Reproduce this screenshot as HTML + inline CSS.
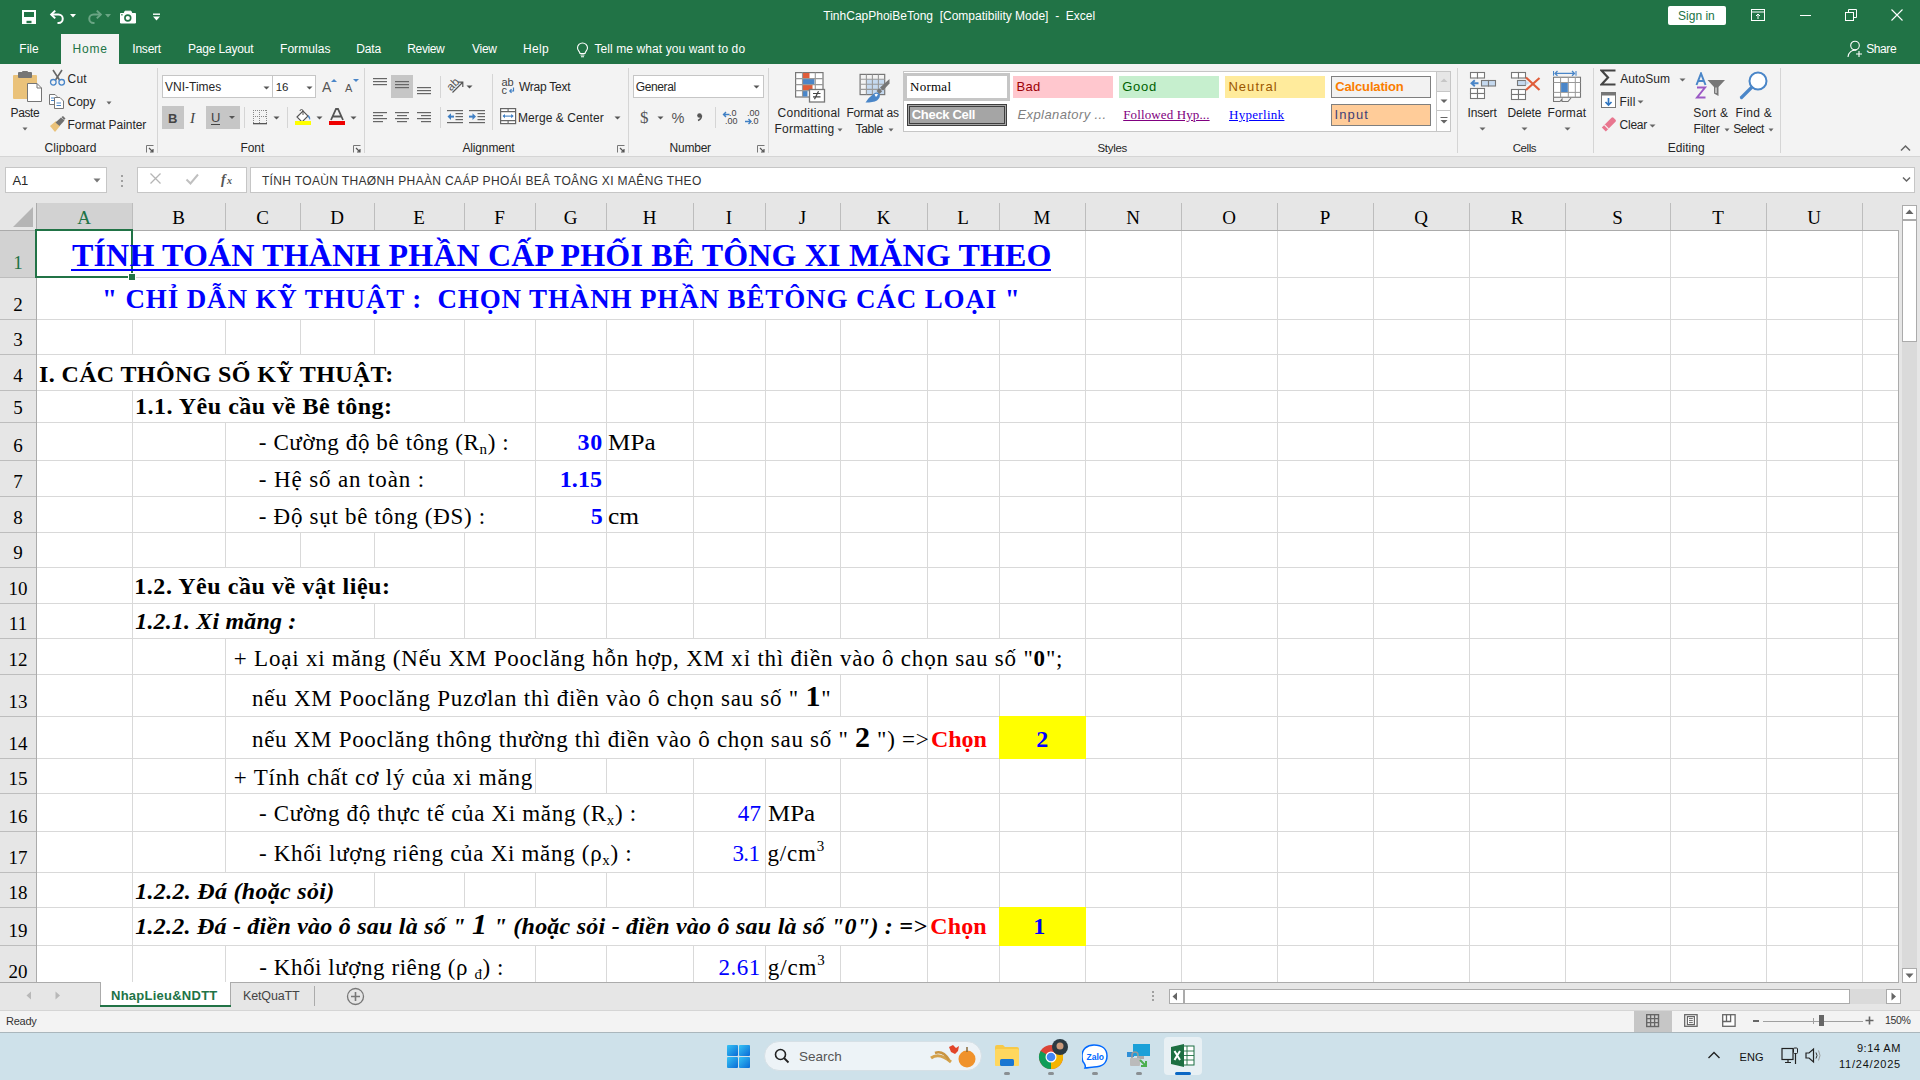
<!DOCTYPE html>
<html><head><meta charset="utf-8"><style>
html,body{margin:0;padding:0;width:1920px;height:1080px;overflow:hidden;background:#f3f3f3;position:relative}
body div, body svg{position:absolute}
body div{white-space:pre;line-height:normal}
.hd{font-family:"Liberation Serif",serif;font-size:19px;text-align:center}
</style></head><body>
<div style="left:0px;top:0px;width:1920px;height:64px;background:#217346;"></div><div style="left:61px;top:34px;width:58px;height:30px;background:#f3f3f3;"></div><div style="left:0px;top:64px;width:1920px;height:92px;background:#f3f3f3;"></div><div style="left:0px;top:156px;width:1920px;height:1px;background:#d5d5d5;"></div><div style="left:0px;top:157px;width:1920px;height:46px;background:#e6e6e6;"></div><div style="left:1898px;top:203px;width:22px;height:780px;background:#e6e6e6;"></div><div style="left:0px;top:983px;width:1920px;height:27px;background:#e6e6e6;"></div><div style="left:0px;top:1010px;width:1920px;height:1px;background:#d5d5d5;"></div><div style="left:0px;top:1011px;width:1920px;height:21px;background:#f3f3f3;"></div><div style="left:0px;top:1032px;width:1920px;height:1px;background:#aab6bc;"></div><div style="left:0px;top:1033px;width:1920px;height:47px;background:#cee1ea;"></div>
<div style="left:0px;top:203px;width:1902px;height:27px;background:#e6e6e6;"></div><div style="left:36px;top:203px;width:96px;height:27px;background:#d2d2d2;"></div><div style="left:0px;top:231px;width:36px;height:751px;background:#e6e6e6;"></div><div style="left:0px;top:231px;width:36px;height:46px;background:#d2d2d2;"></div><div style="left:0px;top:230px;width:1898px;height:1px;background:#ababab;"></div><div style="left:36px;top:203px;width:1px;height:779px;background:#ababab;"></div><div style="left:132px;top:203px;width:1px;height:27px;background:#bdbdbd;"></div><div style="left:225px;top:203px;width:1px;height:27px;background:#bdbdbd;"></div><div style="left:300px;top:203px;width:1px;height:27px;background:#bdbdbd;"></div><div style="left:374px;top:203px;width:1px;height:27px;background:#bdbdbd;"></div><div style="left:464px;top:203px;width:1px;height:27px;background:#bdbdbd;"></div><div style="left:535px;top:203px;width:1px;height:27px;background:#bdbdbd;"></div><div style="left:606px;top:203px;width:1px;height:27px;background:#bdbdbd;"></div><div style="left:693px;top:203px;width:1px;height:27px;background:#bdbdbd;"></div><div style="left:765px;top:203px;width:1px;height:27px;background:#bdbdbd;"></div><div style="left:840px;top:203px;width:1px;height:27px;background:#bdbdbd;"></div><div style="left:927px;top:203px;width:1px;height:27px;background:#bdbdbd;"></div><div style="left:999px;top:203px;width:1px;height:27px;background:#bdbdbd;"></div><div style="left:1085px;top:203px;width:1px;height:27px;background:#bdbdbd;"></div><div style="left:1181px;top:203px;width:1px;height:27px;background:#bdbdbd;"></div><div style="left:1277px;top:203px;width:1px;height:27px;background:#bdbdbd;"></div><div style="left:1373px;top:203px;width:1px;height:27px;background:#bdbdbd;"></div><div style="left:1469px;top:203px;width:1px;height:27px;background:#bdbdbd;"></div><div style="left:1565px;top:203px;width:1px;height:27px;background:#bdbdbd;"></div><div style="left:1670px;top:203px;width:1px;height:27px;background:#bdbdbd;"></div><div style="left:1766px;top:203px;width:1px;height:27px;background:#bdbdbd;"></div><div style="left:1862px;top:203px;width:1px;height:27px;background:#bdbdbd;"></div><div style="left:0px;top:277px;width:36px;height:1px;background:#bdbdbd;"></div><div style="left:0px;top:319px;width:36px;height:1px;background:#bdbdbd;"></div><div style="left:0px;top:354px;width:36px;height:1px;background:#bdbdbd;"></div><div style="left:0px;top:390px;width:36px;height:1px;background:#bdbdbd;"></div><div style="left:0px;top:422px;width:36px;height:1px;background:#bdbdbd;"></div><div style="left:0px;top:460px;width:36px;height:1px;background:#bdbdbd;"></div><div style="left:0px;top:496px;width:36px;height:1px;background:#bdbdbd;"></div><div style="left:0px;top:532px;width:36px;height:1px;background:#bdbdbd;"></div><div style="left:0px;top:567px;width:36px;height:1px;background:#bdbdbd;"></div><div style="left:0px;top:603px;width:36px;height:1px;background:#bdbdbd;"></div><div style="left:0px;top:638px;width:36px;height:1px;background:#bdbdbd;"></div><div style="left:0px;top:674px;width:36px;height:1px;background:#bdbdbd;"></div><div style="left:0px;top:716px;width:36px;height:1px;background:#bdbdbd;"></div><div style="left:0px;top:758px;width:36px;height:1px;background:#bdbdbd;"></div><div style="left:0px;top:793px;width:36px;height:1px;background:#bdbdbd;"></div><div style="left:0px;top:831px;width:36px;height:1px;background:#bdbdbd;"></div><div style="left:0px;top:872px;width:36px;height:1px;background:#bdbdbd;"></div><div style="left:0px;top:907px;width:36px;height:1px;background:#bdbdbd;"></div><div style="left:0px;top:945px;width:36px;height:1px;background:#bdbdbd;"></div><svg style="position:absolute;left:12px;top:206px" width="22" height="22"><polygon points="21,1 21,21 1,21" fill="#b5b5b5"/></svg>
<div style="left:37px;top:231px;width:1861px;height:751px;background:#fff;"></div><div style="left:37px;top:277px;width:1861px;height:1px;background:#d9d9d9;"></div><div style="left:37px;top:319px;width:1861px;height:1px;background:#d9d9d9;"></div><div style="left:37px;top:354px;width:1861px;height:1px;background:#d9d9d9;"></div><div style="left:37px;top:390px;width:1861px;height:1px;background:#d9d9d9;"></div><div style="left:37px;top:422px;width:1861px;height:1px;background:#d9d9d9;"></div><div style="left:37px;top:460px;width:1861px;height:1px;background:#d9d9d9;"></div><div style="left:37px;top:496px;width:1861px;height:1px;background:#d9d9d9;"></div><div style="left:37px;top:532px;width:1861px;height:1px;background:#d9d9d9;"></div><div style="left:37px;top:567px;width:1861px;height:1px;background:#d9d9d9;"></div><div style="left:37px;top:603px;width:1861px;height:1px;background:#d9d9d9;"></div><div style="left:37px;top:638px;width:1861px;height:1px;background:#d9d9d9;"></div><div style="left:37px;top:674px;width:1861px;height:1px;background:#d9d9d9;"></div><div style="left:37px;top:716px;width:1861px;height:1px;background:#d9d9d9;"></div><div style="left:37px;top:758px;width:1861px;height:1px;background:#d9d9d9;"></div><div style="left:37px;top:793px;width:1861px;height:1px;background:#d9d9d9;"></div><div style="left:37px;top:831px;width:1861px;height:1px;background:#d9d9d9;"></div><div style="left:37px;top:872px;width:1861px;height:1px;background:#d9d9d9;"></div><div style="left:37px;top:907px;width:1861px;height:1px;background:#d9d9d9;"></div><div style="left:37px;top:945px;width:1861px;height:1px;background:#d9d9d9;"></div><div style="left:1085px;top:231px;width:1px;height:46px;background:#d9d9d9;"></div><div style="left:1181px;top:231px;width:1px;height:46px;background:#d9d9d9;"></div><div style="left:1277px;top:231px;width:1px;height:46px;background:#d9d9d9;"></div><div style="left:1373px;top:231px;width:1px;height:46px;background:#d9d9d9;"></div><div style="left:1469px;top:231px;width:1px;height:46px;background:#d9d9d9;"></div><div style="left:1565px;top:231px;width:1px;height:46px;background:#d9d9d9;"></div><div style="left:1670px;top:231px;width:1px;height:46px;background:#d9d9d9;"></div><div style="left:1766px;top:231px;width:1px;height:46px;background:#d9d9d9;"></div><div style="left:1862px;top:231px;width:1px;height:46px;background:#d9d9d9;"></div><div style="left:1085px;top:278px;width:1px;height:41px;background:#d9d9d9;"></div><div style="left:1181px;top:278px;width:1px;height:41px;background:#d9d9d9;"></div><div style="left:1277px;top:278px;width:1px;height:41px;background:#d9d9d9;"></div><div style="left:1373px;top:278px;width:1px;height:41px;background:#d9d9d9;"></div><div style="left:1469px;top:278px;width:1px;height:41px;background:#d9d9d9;"></div><div style="left:1565px;top:278px;width:1px;height:41px;background:#d9d9d9;"></div><div style="left:1670px;top:278px;width:1px;height:41px;background:#d9d9d9;"></div><div style="left:1766px;top:278px;width:1px;height:41px;background:#d9d9d9;"></div><div style="left:1862px;top:278px;width:1px;height:41px;background:#d9d9d9;"></div><div style="left:132px;top:320px;width:1px;height:34px;background:#d9d9d9;"></div><div style="left:225px;top:320px;width:1px;height:34px;background:#d9d9d9;"></div><div style="left:300px;top:320px;width:1px;height:34px;background:#d9d9d9;"></div><div style="left:374px;top:320px;width:1px;height:34px;background:#d9d9d9;"></div><div style="left:464px;top:320px;width:1px;height:34px;background:#d9d9d9;"></div><div style="left:535px;top:320px;width:1px;height:34px;background:#d9d9d9;"></div><div style="left:606px;top:320px;width:1px;height:34px;background:#d9d9d9;"></div><div style="left:693px;top:320px;width:1px;height:34px;background:#d9d9d9;"></div><div style="left:765px;top:320px;width:1px;height:34px;background:#d9d9d9;"></div><div style="left:840px;top:320px;width:1px;height:34px;background:#d9d9d9;"></div><div style="left:927px;top:320px;width:1px;height:34px;background:#d9d9d9;"></div><div style="left:999px;top:320px;width:1px;height:34px;background:#d9d9d9;"></div><div style="left:1085px;top:320px;width:1px;height:34px;background:#d9d9d9;"></div><div style="left:1181px;top:320px;width:1px;height:34px;background:#d9d9d9;"></div><div style="left:1277px;top:320px;width:1px;height:34px;background:#d9d9d9;"></div><div style="left:1373px;top:320px;width:1px;height:34px;background:#d9d9d9;"></div><div style="left:1469px;top:320px;width:1px;height:34px;background:#d9d9d9;"></div><div style="left:1565px;top:320px;width:1px;height:34px;background:#d9d9d9;"></div><div style="left:1670px;top:320px;width:1px;height:34px;background:#d9d9d9;"></div><div style="left:1766px;top:320px;width:1px;height:34px;background:#d9d9d9;"></div><div style="left:1862px;top:320px;width:1px;height:34px;background:#d9d9d9;"></div><div style="left:464px;top:355px;width:1px;height:35px;background:#d9d9d9;"></div><div style="left:535px;top:355px;width:1px;height:35px;background:#d9d9d9;"></div><div style="left:606px;top:355px;width:1px;height:35px;background:#d9d9d9;"></div><div style="left:693px;top:355px;width:1px;height:35px;background:#d9d9d9;"></div><div style="left:765px;top:355px;width:1px;height:35px;background:#d9d9d9;"></div><div style="left:840px;top:355px;width:1px;height:35px;background:#d9d9d9;"></div><div style="left:927px;top:355px;width:1px;height:35px;background:#d9d9d9;"></div><div style="left:999px;top:355px;width:1px;height:35px;background:#d9d9d9;"></div><div style="left:1085px;top:355px;width:1px;height:35px;background:#d9d9d9;"></div><div style="left:1181px;top:355px;width:1px;height:35px;background:#d9d9d9;"></div><div style="left:1277px;top:355px;width:1px;height:35px;background:#d9d9d9;"></div><div style="left:1373px;top:355px;width:1px;height:35px;background:#d9d9d9;"></div><div style="left:1469px;top:355px;width:1px;height:35px;background:#d9d9d9;"></div><div style="left:1565px;top:355px;width:1px;height:35px;background:#d9d9d9;"></div><div style="left:1670px;top:355px;width:1px;height:35px;background:#d9d9d9;"></div><div style="left:1766px;top:355px;width:1px;height:35px;background:#d9d9d9;"></div><div style="left:1862px;top:355px;width:1px;height:35px;background:#d9d9d9;"></div><div style="left:132px;top:391px;width:1px;height:31px;background:#d9d9d9;"></div><div style="left:464px;top:391px;width:1px;height:31px;background:#d9d9d9;"></div><div style="left:535px;top:391px;width:1px;height:31px;background:#d9d9d9;"></div><div style="left:606px;top:391px;width:1px;height:31px;background:#d9d9d9;"></div><div style="left:693px;top:391px;width:1px;height:31px;background:#d9d9d9;"></div><div style="left:765px;top:391px;width:1px;height:31px;background:#d9d9d9;"></div><div style="left:840px;top:391px;width:1px;height:31px;background:#d9d9d9;"></div><div style="left:927px;top:391px;width:1px;height:31px;background:#d9d9d9;"></div><div style="left:999px;top:391px;width:1px;height:31px;background:#d9d9d9;"></div><div style="left:1085px;top:391px;width:1px;height:31px;background:#d9d9d9;"></div><div style="left:1181px;top:391px;width:1px;height:31px;background:#d9d9d9;"></div><div style="left:1277px;top:391px;width:1px;height:31px;background:#d9d9d9;"></div><div style="left:1373px;top:391px;width:1px;height:31px;background:#d9d9d9;"></div><div style="left:1469px;top:391px;width:1px;height:31px;background:#d9d9d9;"></div><div style="left:1565px;top:391px;width:1px;height:31px;background:#d9d9d9;"></div><div style="left:1670px;top:391px;width:1px;height:31px;background:#d9d9d9;"></div><div style="left:1766px;top:391px;width:1px;height:31px;background:#d9d9d9;"></div><div style="left:1862px;top:391px;width:1px;height:31px;background:#d9d9d9;"></div><div style="left:132px;top:423px;width:1px;height:37px;background:#d9d9d9;"></div><div style="left:225px;top:423px;width:1px;height:37px;background:#d9d9d9;"></div><div style="left:535px;top:423px;width:1px;height:37px;background:#d9d9d9;"></div><div style="left:606px;top:423px;width:1px;height:37px;background:#d9d9d9;"></div><div style="left:693px;top:423px;width:1px;height:37px;background:#d9d9d9;"></div><div style="left:765px;top:423px;width:1px;height:37px;background:#d9d9d9;"></div><div style="left:840px;top:423px;width:1px;height:37px;background:#d9d9d9;"></div><div style="left:927px;top:423px;width:1px;height:37px;background:#d9d9d9;"></div><div style="left:999px;top:423px;width:1px;height:37px;background:#d9d9d9;"></div><div style="left:1085px;top:423px;width:1px;height:37px;background:#d9d9d9;"></div><div style="left:1181px;top:423px;width:1px;height:37px;background:#d9d9d9;"></div><div style="left:1277px;top:423px;width:1px;height:37px;background:#d9d9d9;"></div><div style="left:1373px;top:423px;width:1px;height:37px;background:#d9d9d9;"></div><div style="left:1469px;top:423px;width:1px;height:37px;background:#d9d9d9;"></div><div style="left:1565px;top:423px;width:1px;height:37px;background:#d9d9d9;"></div><div style="left:1670px;top:423px;width:1px;height:37px;background:#d9d9d9;"></div><div style="left:1766px;top:423px;width:1px;height:37px;background:#d9d9d9;"></div><div style="left:1862px;top:423px;width:1px;height:37px;background:#d9d9d9;"></div><div style="left:132px;top:461px;width:1px;height:35px;background:#d9d9d9;"></div><div style="left:225px;top:461px;width:1px;height:35px;background:#d9d9d9;"></div><div style="left:464px;top:461px;width:1px;height:35px;background:#d9d9d9;"></div><div style="left:535px;top:461px;width:1px;height:35px;background:#d9d9d9;"></div><div style="left:606px;top:461px;width:1px;height:35px;background:#d9d9d9;"></div><div style="left:693px;top:461px;width:1px;height:35px;background:#d9d9d9;"></div><div style="left:765px;top:461px;width:1px;height:35px;background:#d9d9d9;"></div><div style="left:840px;top:461px;width:1px;height:35px;background:#d9d9d9;"></div><div style="left:927px;top:461px;width:1px;height:35px;background:#d9d9d9;"></div><div style="left:999px;top:461px;width:1px;height:35px;background:#d9d9d9;"></div><div style="left:1085px;top:461px;width:1px;height:35px;background:#d9d9d9;"></div><div style="left:1181px;top:461px;width:1px;height:35px;background:#d9d9d9;"></div><div style="left:1277px;top:461px;width:1px;height:35px;background:#d9d9d9;"></div><div style="left:1373px;top:461px;width:1px;height:35px;background:#d9d9d9;"></div><div style="left:1469px;top:461px;width:1px;height:35px;background:#d9d9d9;"></div><div style="left:1565px;top:461px;width:1px;height:35px;background:#d9d9d9;"></div><div style="left:1670px;top:461px;width:1px;height:35px;background:#d9d9d9;"></div><div style="left:1766px;top:461px;width:1px;height:35px;background:#d9d9d9;"></div><div style="left:1862px;top:461px;width:1px;height:35px;background:#d9d9d9;"></div><div style="left:132px;top:497px;width:1px;height:35px;background:#d9d9d9;"></div><div style="left:225px;top:497px;width:1px;height:35px;background:#d9d9d9;"></div><div style="left:535px;top:497px;width:1px;height:35px;background:#d9d9d9;"></div><div style="left:606px;top:497px;width:1px;height:35px;background:#d9d9d9;"></div><div style="left:693px;top:497px;width:1px;height:35px;background:#d9d9d9;"></div><div style="left:765px;top:497px;width:1px;height:35px;background:#d9d9d9;"></div><div style="left:840px;top:497px;width:1px;height:35px;background:#d9d9d9;"></div><div style="left:927px;top:497px;width:1px;height:35px;background:#d9d9d9;"></div><div style="left:999px;top:497px;width:1px;height:35px;background:#d9d9d9;"></div><div style="left:1085px;top:497px;width:1px;height:35px;background:#d9d9d9;"></div><div style="left:1181px;top:497px;width:1px;height:35px;background:#d9d9d9;"></div><div style="left:1277px;top:497px;width:1px;height:35px;background:#d9d9d9;"></div><div style="left:1373px;top:497px;width:1px;height:35px;background:#d9d9d9;"></div><div style="left:1469px;top:497px;width:1px;height:35px;background:#d9d9d9;"></div><div style="left:1565px;top:497px;width:1px;height:35px;background:#d9d9d9;"></div><div style="left:1670px;top:497px;width:1px;height:35px;background:#d9d9d9;"></div><div style="left:1766px;top:497px;width:1px;height:35px;background:#d9d9d9;"></div><div style="left:1862px;top:497px;width:1px;height:35px;background:#d9d9d9;"></div><div style="left:132px;top:533px;width:1px;height:34px;background:#d9d9d9;"></div><div style="left:225px;top:533px;width:1px;height:34px;background:#d9d9d9;"></div><div style="left:300px;top:533px;width:1px;height:34px;background:#d9d9d9;"></div><div style="left:374px;top:533px;width:1px;height:34px;background:#d9d9d9;"></div><div style="left:464px;top:533px;width:1px;height:34px;background:#d9d9d9;"></div><div style="left:535px;top:533px;width:1px;height:34px;background:#d9d9d9;"></div><div style="left:606px;top:533px;width:1px;height:34px;background:#d9d9d9;"></div><div style="left:693px;top:533px;width:1px;height:34px;background:#d9d9d9;"></div><div style="left:765px;top:533px;width:1px;height:34px;background:#d9d9d9;"></div><div style="left:840px;top:533px;width:1px;height:34px;background:#d9d9d9;"></div><div style="left:927px;top:533px;width:1px;height:34px;background:#d9d9d9;"></div><div style="left:999px;top:533px;width:1px;height:34px;background:#d9d9d9;"></div><div style="left:1085px;top:533px;width:1px;height:34px;background:#d9d9d9;"></div><div style="left:1181px;top:533px;width:1px;height:34px;background:#d9d9d9;"></div><div style="left:1277px;top:533px;width:1px;height:34px;background:#d9d9d9;"></div><div style="left:1373px;top:533px;width:1px;height:34px;background:#d9d9d9;"></div><div style="left:1469px;top:533px;width:1px;height:34px;background:#d9d9d9;"></div><div style="left:1565px;top:533px;width:1px;height:34px;background:#d9d9d9;"></div><div style="left:1670px;top:533px;width:1px;height:34px;background:#d9d9d9;"></div><div style="left:1766px;top:533px;width:1px;height:34px;background:#d9d9d9;"></div><div style="left:1862px;top:533px;width:1px;height:34px;background:#d9d9d9;"></div><div style="left:132px;top:568px;width:1px;height:35px;background:#d9d9d9;"></div><div style="left:464px;top:568px;width:1px;height:35px;background:#d9d9d9;"></div><div style="left:535px;top:568px;width:1px;height:35px;background:#d9d9d9;"></div><div style="left:606px;top:568px;width:1px;height:35px;background:#d9d9d9;"></div><div style="left:693px;top:568px;width:1px;height:35px;background:#d9d9d9;"></div><div style="left:765px;top:568px;width:1px;height:35px;background:#d9d9d9;"></div><div style="left:840px;top:568px;width:1px;height:35px;background:#d9d9d9;"></div><div style="left:927px;top:568px;width:1px;height:35px;background:#d9d9d9;"></div><div style="left:999px;top:568px;width:1px;height:35px;background:#d9d9d9;"></div><div style="left:1085px;top:568px;width:1px;height:35px;background:#d9d9d9;"></div><div style="left:1181px;top:568px;width:1px;height:35px;background:#d9d9d9;"></div><div style="left:1277px;top:568px;width:1px;height:35px;background:#d9d9d9;"></div><div style="left:1373px;top:568px;width:1px;height:35px;background:#d9d9d9;"></div><div style="left:1469px;top:568px;width:1px;height:35px;background:#d9d9d9;"></div><div style="left:1565px;top:568px;width:1px;height:35px;background:#d9d9d9;"></div><div style="left:1670px;top:568px;width:1px;height:35px;background:#d9d9d9;"></div><div style="left:1766px;top:568px;width:1px;height:35px;background:#d9d9d9;"></div><div style="left:1862px;top:568px;width:1px;height:35px;background:#d9d9d9;"></div><div style="left:132px;top:604px;width:1px;height:34px;background:#d9d9d9;"></div><div style="left:374px;top:604px;width:1px;height:34px;background:#d9d9d9;"></div><div style="left:464px;top:604px;width:1px;height:34px;background:#d9d9d9;"></div><div style="left:535px;top:604px;width:1px;height:34px;background:#d9d9d9;"></div><div style="left:606px;top:604px;width:1px;height:34px;background:#d9d9d9;"></div><div style="left:693px;top:604px;width:1px;height:34px;background:#d9d9d9;"></div><div style="left:765px;top:604px;width:1px;height:34px;background:#d9d9d9;"></div><div style="left:840px;top:604px;width:1px;height:34px;background:#d9d9d9;"></div><div style="left:927px;top:604px;width:1px;height:34px;background:#d9d9d9;"></div><div style="left:999px;top:604px;width:1px;height:34px;background:#d9d9d9;"></div><div style="left:1085px;top:604px;width:1px;height:34px;background:#d9d9d9;"></div><div style="left:1181px;top:604px;width:1px;height:34px;background:#d9d9d9;"></div><div style="left:1277px;top:604px;width:1px;height:34px;background:#d9d9d9;"></div><div style="left:1373px;top:604px;width:1px;height:34px;background:#d9d9d9;"></div><div style="left:1469px;top:604px;width:1px;height:34px;background:#d9d9d9;"></div><div style="left:1565px;top:604px;width:1px;height:34px;background:#d9d9d9;"></div><div style="left:1670px;top:604px;width:1px;height:34px;background:#d9d9d9;"></div><div style="left:1766px;top:604px;width:1px;height:34px;background:#d9d9d9;"></div><div style="left:1862px;top:604px;width:1px;height:34px;background:#d9d9d9;"></div><div style="left:132px;top:639px;width:1px;height:35px;background:#d9d9d9;"></div><div style="left:225px;top:639px;width:1px;height:35px;background:#d9d9d9;"></div><div style="left:1085px;top:639px;width:1px;height:35px;background:#d9d9d9;"></div><div style="left:1181px;top:639px;width:1px;height:35px;background:#d9d9d9;"></div><div style="left:1277px;top:639px;width:1px;height:35px;background:#d9d9d9;"></div><div style="left:1373px;top:639px;width:1px;height:35px;background:#d9d9d9;"></div><div style="left:1469px;top:639px;width:1px;height:35px;background:#d9d9d9;"></div><div style="left:1565px;top:639px;width:1px;height:35px;background:#d9d9d9;"></div><div style="left:1670px;top:639px;width:1px;height:35px;background:#d9d9d9;"></div><div style="left:1766px;top:639px;width:1px;height:35px;background:#d9d9d9;"></div><div style="left:1862px;top:639px;width:1px;height:35px;background:#d9d9d9;"></div><div style="left:132px;top:675px;width:1px;height:41px;background:#d9d9d9;"></div><div style="left:225px;top:675px;width:1px;height:41px;background:#d9d9d9;"></div><div style="left:840px;top:675px;width:1px;height:41px;background:#d9d9d9;"></div><div style="left:927px;top:675px;width:1px;height:41px;background:#d9d9d9;"></div><div style="left:999px;top:675px;width:1px;height:41px;background:#d9d9d9;"></div><div style="left:1085px;top:675px;width:1px;height:41px;background:#d9d9d9;"></div><div style="left:1181px;top:675px;width:1px;height:41px;background:#d9d9d9;"></div><div style="left:1277px;top:675px;width:1px;height:41px;background:#d9d9d9;"></div><div style="left:1373px;top:675px;width:1px;height:41px;background:#d9d9d9;"></div><div style="left:1469px;top:675px;width:1px;height:41px;background:#d9d9d9;"></div><div style="left:1565px;top:675px;width:1px;height:41px;background:#d9d9d9;"></div><div style="left:1670px;top:675px;width:1px;height:41px;background:#d9d9d9;"></div><div style="left:1766px;top:675px;width:1px;height:41px;background:#d9d9d9;"></div><div style="left:1862px;top:675px;width:1px;height:41px;background:#d9d9d9;"></div><div style="left:132px;top:717px;width:1px;height:41px;background:#d9d9d9;"></div><div style="left:225px;top:717px;width:1px;height:41px;background:#d9d9d9;"></div><div style="left:927px;top:717px;width:1px;height:41px;background:#d9d9d9;"></div><div style="left:999px;top:717px;width:1px;height:41px;background:#d9d9d9;"></div><div style="left:1085px;top:717px;width:1px;height:41px;background:#d9d9d9;"></div><div style="left:1181px;top:717px;width:1px;height:41px;background:#d9d9d9;"></div><div style="left:1277px;top:717px;width:1px;height:41px;background:#d9d9d9;"></div><div style="left:1373px;top:717px;width:1px;height:41px;background:#d9d9d9;"></div><div style="left:1469px;top:717px;width:1px;height:41px;background:#d9d9d9;"></div><div style="left:1565px;top:717px;width:1px;height:41px;background:#d9d9d9;"></div><div style="left:1670px;top:717px;width:1px;height:41px;background:#d9d9d9;"></div><div style="left:1766px;top:717px;width:1px;height:41px;background:#d9d9d9;"></div><div style="left:1862px;top:717px;width:1px;height:41px;background:#d9d9d9;"></div><div style="left:132px;top:759px;width:1px;height:34px;background:#d9d9d9;"></div><div style="left:225px;top:759px;width:1px;height:34px;background:#d9d9d9;"></div><div style="left:535px;top:759px;width:1px;height:34px;background:#d9d9d9;"></div><div style="left:606px;top:759px;width:1px;height:34px;background:#d9d9d9;"></div><div style="left:693px;top:759px;width:1px;height:34px;background:#d9d9d9;"></div><div style="left:765px;top:759px;width:1px;height:34px;background:#d9d9d9;"></div><div style="left:840px;top:759px;width:1px;height:34px;background:#d9d9d9;"></div><div style="left:927px;top:759px;width:1px;height:34px;background:#d9d9d9;"></div><div style="left:999px;top:759px;width:1px;height:34px;background:#d9d9d9;"></div><div style="left:1085px;top:759px;width:1px;height:34px;background:#d9d9d9;"></div><div style="left:1181px;top:759px;width:1px;height:34px;background:#d9d9d9;"></div><div style="left:1277px;top:759px;width:1px;height:34px;background:#d9d9d9;"></div><div style="left:1373px;top:759px;width:1px;height:34px;background:#d9d9d9;"></div><div style="left:1469px;top:759px;width:1px;height:34px;background:#d9d9d9;"></div><div style="left:1565px;top:759px;width:1px;height:34px;background:#d9d9d9;"></div><div style="left:1670px;top:759px;width:1px;height:34px;background:#d9d9d9;"></div><div style="left:1766px;top:759px;width:1px;height:34px;background:#d9d9d9;"></div><div style="left:1862px;top:759px;width:1px;height:34px;background:#d9d9d9;"></div><div style="left:132px;top:794px;width:1px;height:37px;background:#d9d9d9;"></div><div style="left:225px;top:794px;width:1px;height:37px;background:#d9d9d9;"></div><div style="left:693px;top:794px;width:1px;height:37px;background:#d9d9d9;"></div><div style="left:765px;top:794px;width:1px;height:37px;background:#d9d9d9;"></div><div style="left:840px;top:794px;width:1px;height:37px;background:#d9d9d9;"></div><div style="left:927px;top:794px;width:1px;height:37px;background:#d9d9d9;"></div><div style="left:999px;top:794px;width:1px;height:37px;background:#d9d9d9;"></div><div style="left:1085px;top:794px;width:1px;height:37px;background:#d9d9d9;"></div><div style="left:1181px;top:794px;width:1px;height:37px;background:#d9d9d9;"></div><div style="left:1277px;top:794px;width:1px;height:37px;background:#d9d9d9;"></div><div style="left:1373px;top:794px;width:1px;height:37px;background:#d9d9d9;"></div><div style="left:1469px;top:794px;width:1px;height:37px;background:#d9d9d9;"></div><div style="left:1565px;top:794px;width:1px;height:37px;background:#d9d9d9;"></div><div style="left:1670px;top:794px;width:1px;height:37px;background:#d9d9d9;"></div><div style="left:1766px;top:794px;width:1px;height:37px;background:#d9d9d9;"></div><div style="left:1862px;top:794px;width:1px;height:37px;background:#d9d9d9;"></div><div style="left:132px;top:832px;width:1px;height:40px;background:#d9d9d9;"></div><div style="left:225px;top:832px;width:1px;height:40px;background:#d9d9d9;"></div><div style="left:693px;top:832px;width:1px;height:40px;background:#d9d9d9;"></div><div style="left:765px;top:832px;width:1px;height:40px;background:#d9d9d9;"></div><div style="left:840px;top:832px;width:1px;height:40px;background:#d9d9d9;"></div><div style="left:927px;top:832px;width:1px;height:40px;background:#d9d9d9;"></div><div style="left:999px;top:832px;width:1px;height:40px;background:#d9d9d9;"></div><div style="left:1085px;top:832px;width:1px;height:40px;background:#d9d9d9;"></div><div style="left:1181px;top:832px;width:1px;height:40px;background:#d9d9d9;"></div><div style="left:1277px;top:832px;width:1px;height:40px;background:#d9d9d9;"></div><div style="left:1373px;top:832px;width:1px;height:40px;background:#d9d9d9;"></div><div style="left:1469px;top:832px;width:1px;height:40px;background:#d9d9d9;"></div><div style="left:1565px;top:832px;width:1px;height:40px;background:#d9d9d9;"></div><div style="left:1670px;top:832px;width:1px;height:40px;background:#d9d9d9;"></div><div style="left:1766px;top:832px;width:1px;height:40px;background:#d9d9d9;"></div><div style="left:1862px;top:832px;width:1px;height:40px;background:#d9d9d9;"></div><div style="left:132px;top:873px;width:1px;height:34px;background:#d9d9d9;"></div><div style="left:374px;top:873px;width:1px;height:34px;background:#d9d9d9;"></div><div style="left:464px;top:873px;width:1px;height:34px;background:#d9d9d9;"></div><div style="left:535px;top:873px;width:1px;height:34px;background:#d9d9d9;"></div><div style="left:606px;top:873px;width:1px;height:34px;background:#d9d9d9;"></div><div style="left:693px;top:873px;width:1px;height:34px;background:#d9d9d9;"></div><div style="left:765px;top:873px;width:1px;height:34px;background:#d9d9d9;"></div><div style="left:840px;top:873px;width:1px;height:34px;background:#d9d9d9;"></div><div style="left:927px;top:873px;width:1px;height:34px;background:#d9d9d9;"></div><div style="left:999px;top:873px;width:1px;height:34px;background:#d9d9d9;"></div><div style="left:1085px;top:873px;width:1px;height:34px;background:#d9d9d9;"></div><div style="left:1181px;top:873px;width:1px;height:34px;background:#d9d9d9;"></div><div style="left:1277px;top:873px;width:1px;height:34px;background:#d9d9d9;"></div><div style="left:1373px;top:873px;width:1px;height:34px;background:#d9d9d9;"></div><div style="left:1469px;top:873px;width:1px;height:34px;background:#d9d9d9;"></div><div style="left:1565px;top:873px;width:1px;height:34px;background:#d9d9d9;"></div><div style="left:1670px;top:873px;width:1px;height:34px;background:#d9d9d9;"></div><div style="left:1766px;top:873px;width:1px;height:34px;background:#d9d9d9;"></div><div style="left:1862px;top:873px;width:1px;height:34px;background:#d9d9d9;"></div><div style="left:132px;top:908px;width:1px;height:37px;background:#d9d9d9;"></div><div style="left:927px;top:908px;width:1px;height:37px;background:#d9d9d9;"></div><div style="left:999px;top:908px;width:1px;height:37px;background:#d9d9d9;"></div><div style="left:1085px;top:908px;width:1px;height:37px;background:#d9d9d9;"></div><div style="left:1181px;top:908px;width:1px;height:37px;background:#d9d9d9;"></div><div style="left:1277px;top:908px;width:1px;height:37px;background:#d9d9d9;"></div><div style="left:1373px;top:908px;width:1px;height:37px;background:#d9d9d9;"></div><div style="left:1469px;top:908px;width:1px;height:37px;background:#d9d9d9;"></div><div style="left:1565px;top:908px;width:1px;height:37px;background:#d9d9d9;"></div><div style="left:1670px;top:908px;width:1px;height:37px;background:#d9d9d9;"></div><div style="left:1766px;top:908px;width:1px;height:37px;background:#d9d9d9;"></div><div style="left:1862px;top:908px;width:1px;height:37px;background:#d9d9d9;"></div><div style="left:132px;top:946px;width:1px;height:36px;background:#d9d9d9;"></div><div style="left:225px;top:946px;width:1px;height:36px;background:#d9d9d9;"></div><div style="left:535px;top:946px;width:1px;height:36px;background:#d9d9d9;"></div><div style="left:606px;top:946px;width:1px;height:36px;background:#d9d9d9;"></div><div style="left:693px;top:946px;width:1px;height:36px;background:#d9d9d9;"></div><div style="left:765px;top:946px;width:1px;height:36px;background:#d9d9d9;"></div><div style="left:840px;top:946px;width:1px;height:36px;background:#d9d9d9;"></div><div style="left:927px;top:946px;width:1px;height:36px;background:#d9d9d9;"></div><div style="left:999px;top:946px;width:1px;height:36px;background:#d9d9d9;"></div><div style="left:1085px;top:946px;width:1px;height:36px;background:#d9d9d9;"></div><div style="left:1181px;top:946px;width:1px;height:36px;background:#d9d9d9;"></div><div style="left:1277px;top:946px;width:1px;height:36px;background:#d9d9d9;"></div><div style="left:1373px;top:946px;width:1px;height:36px;background:#d9d9d9;"></div><div style="left:1469px;top:946px;width:1px;height:36px;background:#d9d9d9;"></div><div style="left:1565px;top:946px;width:1px;height:36px;background:#d9d9d9;"></div><div style="left:1670px;top:946px;width:1px;height:36px;background:#d9d9d9;"></div><div style="left:1766px;top:946px;width:1px;height:36px;background:#d9d9d9;"></div><div style="left:1862px;top:946px;width:1px;height:36px;background:#d9d9d9;"></div><div style="left:999px;top:716px;width:87px;height:43px;background:#ffff00;"></div><div style="left:999px;top:907px;width:87px;height:39px;background:#ffff00;"></div><div style="left:1898px;top:230px;width:1px;height:753px;background:#ababab;"></div><div style="left:0px;top:982px;width:1899px;height:1px;background:#ababab;"></div>
<div class="hd" style="left:36px;width:96px;top:207.1px;color:#217346">A</div><div class="hd" style="left:132px;width:93px;top:207.1px;color:#000">B</div><div class="hd" style="left:225px;width:75px;top:207.1px;color:#000">C</div><div class="hd" style="left:300px;width:74px;top:207.1px;color:#000">D</div><div class="hd" style="left:374px;width:90px;top:207.1px;color:#000">E</div><div class="hd" style="left:464px;width:71px;top:207.1px;color:#000">F</div><div class="hd" style="left:535px;width:71px;top:207.1px;color:#000">G</div><div class="hd" style="left:606px;width:87px;top:207.1px;color:#000">H</div><div class="hd" style="left:693px;width:72px;top:207.1px;color:#000">I</div><div class="hd" style="left:765px;width:75px;top:207.1px;color:#000">J</div><div class="hd" style="left:840px;width:87px;top:207.1px;color:#000">K</div><div class="hd" style="left:927px;width:72px;top:207.1px;color:#000">L</div><div class="hd" style="left:999px;width:86px;top:207.1px;color:#000">M</div><div class="hd" style="left:1085px;width:96px;top:207.1px;color:#000">N</div><div class="hd" style="left:1181px;width:96px;top:207.1px;color:#000">O</div><div class="hd" style="left:1277px;width:96px;top:207.1px;color:#000">P</div><div class="hd" style="left:1373px;width:96px;top:207.1px;color:#000">Q</div><div class="hd" style="left:1469px;width:96px;top:207.1px;color:#000">R</div><div class="hd" style="left:1565px;width:105px;top:207.1px;color:#000">S</div><div class="hd" style="left:1670px;width:96px;top:207.1px;color:#000">T</div><div class="hd" style="left:1766px;width:96px;top:207.1px;color:#000">U</div><div class="hd" style="left:0px;width:36px;top:252.1px;color:#217346">1</div><div class="hd" style="left:0px;width:36px;top:294.1px;color:#000">2</div><div class="hd" style="left:0px;width:36px;top:329.1px;color:#000">3</div><div class="hd" style="left:0px;width:36px;top:365.1px;color:#000">4</div><div class="hd" style="left:0px;width:36px;top:397.1px;color:#000">5</div><div class="hd" style="left:0px;width:36px;top:435.1px;color:#000">6</div><div class="hd" style="left:0px;width:36px;top:471.1px;color:#000">7</div><div class="hd" style="left:0px;width:36px;top:507.1px;color:#000">8</div><div class="hd" style="left:0px;width:36px;top:542.1px;color:#000">9</div><div class="hd" style="left:0px;width:36px;top:578.1px;color:#000">10</div><div class="hd" style="left:0px;width:36px;top:613.1px;color:#000">11</div><div class="hd" style="left:0px;width:36px;top:649.1px;color:#000">12</div><div class="hd" style="left:0px;width:36px;top:691.1px;color:#000">13</div><div class="hd" style="left:0px;width:36px;top:733.1px;color:#000">14</div><div class="hd" style="left:0px;width:36px;top:768.1px;color:#000">15</div><div class="hd" style="left:0px;width:36px;top:806.1px;color:#000">16</div><div class="hd" style="left:0px;width:36px;top:847.1px;color:#000">17</div><div class="hd" style="left:0px;width:36px;top:882.1px;color:#000">18</div><div class="hd" style="left:0px;width:36px;top:920.1px;color:#000">19</div><div class="hd" style="left:0px;width:36px;top:961.1px;color:#000">20</div>
<div style="left:35px;top:229px;width:98px;height:2px;background:#217346;"></div><div style="left:35px;top:229px;width:2px;height:49px;background:#217346;"></div><div style="left:131px;top:229px;width:2px;height:45px;background:#217346;"></div><div style="left:35px;top:276px;width:94px;height:2px;background:#217346;"></div><div style="left:129px;top:274px;width:6px;height:6px;background:#217346;border:1px solid #fff;box-sizing:content-box;left:128px;top:273px"></div>
<svg style="left:21px;top:9px;" width="16" height="16" viewBox="0 0 16 16"><rect x="2" y="2" width="12" height="12" fill="none" stroke="#fff" stroke-width="2"/><rect x="1" y="8" width="14" height="2.4" fill="#fff"/><rect x="3" y="10" width="10" height="5" fill="#fff"/><rect x="5.5" y="11.8" width="5" height="2.4" fill="#217346"/></svg><svg style="left:49px;top:9px;" width="18" height="16" viewBox="0 0 18 16"><path d="M2.5,5.5 H9.5 A4.2,4.2 0 0 1 9.5,14 H8.5" fill="none" stroke="#fff" stroke-width="2"/><path d="M6.2,1.6 L2.2,5.5 L6.2,9.4" fill="none" stroke="#fff" stroke-width="2"/></svg><svg style="left:70px;top:14px;" width="7" height="4" viewBox="0 0 7 4"><polygon points="0,0 6,0 3,3.5" fill="#fff"/></svg><svg style="left:85px;top:9px;" width="18" height="16" viewBox="0 0 18 16"><path d="M15.5,5.5 H8.5 A4.2,4.2 0 0 0 8.5,14 H9.5" fill="none" stroke="#6aa584" stroke-width="2"/><path d="M11.8,1.6 L15.8,5.5 L11.8,9.4" fill="none" stroke="#6aa584" stroke-width="2"/></svg><svg style="left:105px;top:14px;" width="7" height="4" viewBox="0 0 7 4"><polygon points="0,0 6,0 3,3.5" fill="#6aa584"/></svg><svg style="left:119px;top:10px;" width="18" height="14" viewBox="0 0 18 14"><path d="M1.5,3.5 H5 L6,1.2 H12 L13,3.5 H16.5 V13 H1.5 Z" fill="#fff" stroke="#fff" stroke-linejoin="round"/><circle cx="8.8" cy="8" r="2.9" fill="#fff" stroke="#217346" stroke-width="1.6"/><rect x="2.2" y="4.2" width="1.4" height="1.2" fill="#217346"/></svg><svg style="left:152px;top:13px;" width="9" height="10" viewBox="0 0 9 10"><rect x="1" y="0.5" width="7" height="1.4" fill="#fff"/><polygon points="1,3.5 8,3.5 4.5,7.5" fill="#fff"/></svg><div style="left:1668px;top:6px;width:58px;height:19px;background:#fff;border-radius:2px"></div><svg style="left:1751px;top:9px;" width="15" height="13" viewBox="0 0 15 13"><rect x="0.5" y="0.5" width="13" height="11" fill="none" stroke="#fff" stroke-width="1"/><line x1="0.5" y1="3" x2="13.5" y2="3" stroke="#fff"/><path d="M7,10 V5 M5,7 L7,5 L9,7" fill="none" stroke="#fff" stroke-width="1"/></svg><div style="left:1800px;top:15px;width:11px;height:1px;background:#fff;"></div><svg style="left:1845px;top:9px;" width="12" height="12" viewBox="0 0 12 12"><rect x="0.5" y="3.5" width="8" height="8" fill="none" stroke="#fff"/><path d="M3.5,3.5 V0.5 H11.5 V8.5 H8.5" fill="none" stroke="#fff"/></svg><svg style="left:1891px;top:9px;" width="12" height="12" viewBox="0 0 12 12"><path d="M0.5,0.5 L11.5,11.5 M11.5,0.5 L0.5,11.5" stroke="#fff" stroke-width="1.1"/></svg><svg style="left:1847px;top:40px;" width="17" height="18" viewBox="0 0 17 18"><circle cx="8" cy="5.5" r="4.3" fill="none" stroke="#fff" stroke-width="1.1"/><path d="M1,17 A7,7 0 0 1 9.5,10.3" fill="none" stroke="#fff" stroke-width="1.1"/><path d="M12,11 V17 M9,14 H15" stroke="#fff" stroke-width="1.1"/></svg><svg style="left:576px;top:42px;" width="13" height="16" viewBox="0 0 13 16"><path d="M6.5,1 A5,5 0 0 1 11.5,6 C11.5,8.5 9,9.5 9,11.5 H4 C4,9.5 1.5,8.5 1.5,6 A5,5 0 0 1 6.5,1 Z" fill="none" stroke="#fff" stroke-width="1.1"/><path d="M4.5,13 H8.5 M5,14.8 H8" stroke="#fff" stroke-width="1.1"/></svg><svg style="left:12px;top:71px;" width="31" height="32" viewBox="0 0 31 32"><rect x="1" y="4" width="24" height="24" rx="1" fill="#eac27a"/><rect x="6" y="1" width="14" height="6" rx="1" fill="#757575"/><rect x="10" y="0" width="6" height="3" rx="1" fill="#757575"/><path d="M15.5,12.5 H25 L29.5,17 V30.5 H15.5 Z" fill="#fff" stroke="#757575"/><path d="M25,12.5 V17 H29.5" fill="none" stroke="#757575"/></svg><svg style="left:21.5px;top:127px;" width="6" height="4" viewBox="0 0 6 4"><polygon points="0.5,0.5 5.5,0.5 3.0,3.5" fill="#666"/></svg><svg style="left:49px;top:69px;" width="17" height="18" viewBox="0 0 17 18"><path d="M4,1 L10.5,11 M13,1 L6.5,11" stroke="#666" stroke-width="1.6"/><circle cx="4.3" cy="13.3" r="2.8" fill="none" stroke="#4a86c8" stroke-width="1.3"/><circle cx="12.7" cy="13.3" r="2.8" fill="none" stroke="#4a86c8" stroke-width="1.3"/></svg><svg style="left:48px;top:93px;" width="17" height="17" viewBox="0 0 17 17"><path d="M1.5,1.5 H7 L9,3.5 V11.5 H1.5 Z" fill="#fff" stroke="#777"/><path d="M3,5 H6 M3,7.5 H6" stroke="#4a86c8"/><path d="M6.5,4.5 H12 L15.5,8 V15.5 H6.5 Z" fill="#fff" stroke="#777"/><path d="M8.5,10 H13 M8.5,12.5 H13" stroke="#4a86c8" stroke-width="1.2"/></svg><svg style="left:105.5px;top:101px;" width="6" height="4" viewBox="0 0 6 4"><polygon points="0.5,0.5 5.5,0.5 3.0,3.5" fill="#666"/></svg><svg style="left:48px;top:116px;" width="18" height="17" viewBox="0 0 18 17"><path d="M2,10 L8,5 L12,10 L7,16 Z" fill="#eac27a"/><path d="M7.5,6.5 L13,1.5 L16.5,4.5 L11.5,10 Z" fill="#707070"/><path d="M13.5,1 L15,0 L17.5,2.5 L16,4" fill="#707070"/></svg><svg style="left:146px;top:145px;" width="8" height="8" viewBox="0 0 8 8"><path d="M0.5,7.5 V0.5 H7.5" fill="none" stroke="#777" stroke-width="1"/><path d="M3,3 L7,7 M7,4 V7 H4" fill="none" stroke="#555" stroke-width="1.2"/></svg><div style="left:157px;top:68px;width:1px;height:85px;background:#d5d5d5;"></div><div style="left:162px;top:75px;width:111px;height:23px;background:#fff;box-sizing:border-box;border:1px solid #c6c6c6"></div><div style="left:272px;top:75px;width:44px;height:23px;background:#fff;box-sizing:border-box;border:1px solid #c6c6c6"></div><svg style="left:262.5px;top:86px;" width="7" height="4" viewBox="0 0 7 4"><polygon points="0.5,0.5 6.5,0.5 3.5,3.5" fill="#555"/></svg><svg style="left:305.5px;top:86px;" width="7" height="4" viewBox="0 0 7 4"><polygon points="0.5,0.5 6.5,0.5 3.5,3.5" fill="#555"/></svg><svg style="left:321px;top:78px;" width="16" height="15" viewBox="0 0 16 15"><text x="1" y="14" font-family="Liberation Sans" font-size="14" fill="#555">A</text><polygon points="10,4 13,1 16,4" fill="#4a86c8"/></svg><svg style="left:343px;top:78px;" width="16" height="15" viewBox="0 0 16 15"><text x="2" y="14" font-family="Liberation Sans" font-size="11" fill="#555">A</text><polygon points="10,1 16,1 13,4" fill="#4a86c8"/></svg><div style="left:162px;top:106px;width:22px;height:23px;background:#c6c6c6;"></div><svg style="left:162px;top:106px;" width="22" height="23" viewBox="0 0 22 23"><text x="6" y="17" font-family="Liberation Sans" font-weight="bold" font-size="13" fill="#444">B</text></svg><svg style="left:186px;top:106px;" width="16" height="23" viewBox="0 0 16 23"><text x="4" y="17" font-family="Liberation Serif" font-style="italic" font-size="15" fill="#444">I</text></svg><div style="left:206px;top:106px;width:34px;height:23px;background:#c6c6c6;"></div><svg style="left:206px;top:106px;" width="34" height="23" viewBox="0 0 34 23"><text x="5" y="16" font-family="Liberation Sans" font-size="13" fill="#444">U</text><rect x="5" y="18" width="9" height="1" fill="#444"/><polygon points="23,10 29,10 26,13" fill="#555"/></svg><div style="left:244px;top:107px;width:1px;height:21px;background:#d5d5d5;"></div><svg style="left:253px;top:110px;" width="15" height="15" viewBox="0 0 15 15"><rect x="0" y="0" width="1" height="1" fill="#888"/><rect x="0" y="0" width="1" height="1" fill="#888"/><rect x="13" y="0" width="1" height="1" fill="#888"/><rect x="0" y="6" width="1" height="1" fill="#888"/><rect x="6" y="0" width="1" height="1" fill="#888"/><rect x="2" y="0" width="1" height="1" fill="#888"/><rect x="0" y="2" width="1" height="1" fill="#888"/><rect x="13" y="2" width="1" height="1" fill="#888"/><rect x="2" y="6" width="1" height="1" fill="#888"/><rect x="6" y="2" width="1" height="1" fill="#888"/><rect x="4" y="0" width="1" height="1" fill="#888"/><rect x="0" y="4" width="1" height="1" fill="#888"/><rect x="13" y="4" width="1" height="1" fill="#888"/><rect x="4" y="6" width="1" height="1" fill="#888"/><rect x="6" y="4" width="1" height="1" fill="#888"/><rect x="6" y="0" width="1" height="1" fill="#888"/><rect x="0" y="6" width="1" height="1" fill="#888"/><rect x="13" y="6" width="1" height="1" fill="#888"/><rect x="6" y="6" width="1" height="1" fill="#888"/><rect x="6" y="6" width="1" height="1" fill="#888"/><rect x="8" y="0" width="1" height="1" fill="#888"/><rect x="0" y="8" width="1" height="1" fill="#888"/><rect x="13" y="8" width="1" height="1" fill="#888"/><rect x="8" y="6" width="1" height="1" fill="#888"/><rect x="6" y="8" width="1" height="1" fill="#888"/><rect x="10" y="0" width="1" height="1" fill="#888"/><rect x="0" y="10" width="1" height="1" fill="#888"/><rect x="13" y="10" width="1" height="1" fill="#888"/><rect x="10" y="6" width="1" height="1" fill="#888"/><rect x="6" y="10" width="1" height="1" fill="#888"/><rect x="12" y="0" width="1" height="1" fill="#888"/><rect x="0" y="12" width="1" height="1" fill="#888"/><rect x="13" y="12" width="1" height="1" fill="#888"/><rect x="12" y="6" width="1" height="1" fill="#888"/><rect x="6" y="12" width="1" height="1" fill="#888"/><rect x="0" y="13" width="14" height="1.3" fill="#555"/></svg><svg style="left:273.0px;top:116px;" width="7" height="4" viewBox="0 0 7 4"><polygon points="0.5,0.5 6.5,0.5 3.5,3.5" fill="#555"/></svg><div style="left:287px;top:107px;width:1px;height:21px;background:#d5d5d5;"></div><svg style="left:294px;top:108px;" width="18" height="18" viewBox="0 0 18 18"><path d="M3,9 L9,3 L14,8 L8,14 Z" fill="#fff" stroke="#555" stroke-width="1.1"/><path d="M6,3 A1.5,1.5 0 0 1 9,3 V7" fill="none" stroke="#555"/><path d="M14,7 Q17,9 16,12 L14,9 Z" fill="#4a86c8"/><rect x="1" y="13" width="16" height="4" fill="#ffff00"/></svg><svg style="left:316.0px;top:116px;" width="7" height="4" viewBox="0 0 7 4"><polygon points="0.5,0.5 6.5,0.5 3.5,3.5" fill="#555"/></svg><svg style="left:328px;top:108px;" width="18" height="18" viewBox="0 0 18 18"><path d="M3,12 L8,1 H10 L15,12 M5,8.5 H13" fill="none" stroke="#555" stroke-width="1.8"/><rect x="1" y="13" width="16" height="4" fill="#e00"/></svg><svg style="left:350.0px;top:116px;" width="7" height="4" viewBox="0 0 7 4"><polygon points="0.5,0.5 6.5,0.5 3.5,3.5" fill="#555"/></svg><svg style="left:353px;top:145px;" width="8" height="8" viewBox="0 0 8 8"><path d="M0.5,7.5 V0.5 H7.5" fill="none" stroke="#777" stroke-width="1"/><path d="M3,3 L7,7 M7,4 V7 H4" fill="none" stroke="#555" stroke-width="1.2"/></svg><div style="left:364px;top:68px;width:1px;height:85px;background:#d5d5d5;"></div><svg style="left:373px;top:78px;" width="15" height="10" viewBox="0 0 15 10"><rect x="0" y="0" width="14" height="1.2" fill="#666"/><rect x="0" y="3" width="14" height="1.2" fill="#666"/><rect x="0" y="6" width="14" height="1.2" fill="#666"/></svg><div style="left:391px;top:75px;width:22px;height:23px;background:#c6c6c6;"></div><svg style="left:395px;top:81px;" width="15" height="10" viewBox="0 0 15 10"><rect x="0" y="0" width="14" height="1.2" fill="#666"/><rect x="0" y="3" width="14" height="1.2" fill="#666"/><rect x="0" y="6" width="14" height="1.2" fill="#666"/></svg><svg style="left:417px;top:87px;" width="15" height="10" viewBox="0 0 15 10"><rect x="0" y="0" width="14" height="1.2" fill="#666"/><rect x="0" y="3" width="14" height="1.2" fill="#666"/><rect x="0" y="6" width="14" height="1.2" fill="#666"/></svg><div style="left:440px;top:76px;width:1px;height:22px;background:#d5d5d5;"></div><svg style="left:445px;top:76px;" width="22" height="19" viewBox="0 0 22 19"><text x="1.5" y="12.5" font-family="Liberation Sans" font-size="11.5" fill="#555" transform="rotate(-45 7.5 8.5)">ab</text><path d="M7.5,16.5 L17.5,6.5 M13,6.2 H17.8 V11" fill="none" stroke="#555" stroke-width="1.2"/></svg><svg style="left:466.0px;top:85px;" width="7" height="4" viewBox="0 0 7 4"><polygon points="0.5,0.5 6.5,0.5 3.5,3.5" fill="#555"/></svg><svg style="left:373px;top:112px;" width="15" height="13" viewBox="0 0 15 13"><rect x="0" y="0" width="14" height="1.2" fill="#666"/><rect x="0" y="3" width="10" height="1.2" fill="#666"/><rect x="0" y="6" width="14" height="1.2" fill="#666"/><rect x="0" y="9" width="10" height="1.2" fill="#666"/></svg><svg style="left:395px;top:112px;" width="15" height="13" viewBox="0 0 15 13"><rect x="0" y="0" width="14" height="1.2" fill="#666"/><rect x="2" y="3" width="10" height="1.2" fill="#666"/><rect x="0" y="6" width="14" height="1.2" fill="#666"/><rect x="2" y="9" width="10" height="1.2" fill="#666"/></svg><svg style="left:417px;top:112px;" width="15" height="13" viewBox="0 0 15 13"><rect x="0" y="0" width="14" height="1.2" fill="#666"/><rect x="4" y="3" width="10" height="1.2" fill="#666"/><rect x="0" y="6" width="14" height="1.2" fill="#666"/><rect x="4" y="9" width="10" height="1.2" fill="#666"/></svg><div style="left:440px;top:107px;width:1px;height:21px;background:#d5d5d5;"></div><svg style="left:447px;top:110px;" width="17" height="14" viewBox="0 0 17 14"><rect x="0" y="0" width="16" height="1.2" fill="#666"/><rect x="8.5" y="3" width="7.5" height="1.2" fill="#666"/><rect x="8.5" y="6" width="7.5" height="1.2" fill="#666"/><rect x="8.5" y="9" width="7.5" height="1.2" fill="#666"/><rect x="0" y="12" width="16" height="1.2" fill="#666"/><path d="M7,6.6 H2.5" stroke="#3f7fc4" stroke-width="2"/><polygon points="0.5,6.6 4,3.2 4,10" fill="#3f7fc4"/></svg><svg style="left:469px;top:110px;" width="17" height="14" viewBox="0 0 17 14"><rect x="0" y="0" width="16" height="1.2" fill="#666"/><rect x="8.5" y="3" width="7.5" height="1.2" fill="#666"/><rect x="8.5" y="6" width="7.5" height="1.2" fill="#666"/><rect x="8.5" y="9" width="7.5" height="1.2" fill="#666"/><rect x="0" y="12" width="16" height="1.2" fill="#666"/><path d="M0,6.6 H4.5" stroke="#3f7fc4" stroke-width="2"/><polygon points="7,6.6 3.5,3.2 3.5,10" fill="#3f7fc4"/></svg><div style="left:492px;top:74px;width:1px;height:56px;background:#d5d5d5;"></div><svg style="left:501px;top:77px;" width="15" height="18" viewBox="0 0 15 18"><text x="0.5" y="9" font-family="Liberation Sans" font-size="11" fill="#444">ab</text><text x="0.5" y="16.5" font-family="Liberation Sans" font-size="11" fill="#444">c</text><path d="M12.5,10.5 V14 H9 M10.5,12.2 L8.8,14 L10.5,15.8" fill="none" stroke="#3f7fc4" stroke-width="1.2"/></svg><svg style="left:500px;top:108px;" width="17" height="17" viewBox="0 0 17 17"><rect x="0.6" y="0.6" width="15" height="15" fill="#fff" stroke="#666" stroke-width="1.2"/><path d="M0.6,3.6 H15.6 M0.6,12.6 H15.6 M8.1,0.6 V3.6 M8.1,12.6 V15.6" stroke="#666" stroke-width="1.1"/><path d="M3.5,8.1 H12.7" stroke="#3f7fc4" stroke-width="1.1"/><polygon points="2.5,8.1 5,6 5,10.2" fill="#3f7fc4"/><polygon points="13.7,8.1 11.2,6 11.2,10.2" fill="#3f7fc4"/></svg><svg style="left:614.0px;top:116px;" width="7" height="4" viewBox="0 0 7 4"><polygon points="0.5,0.5 6.5,0.5 3.5,3.5" fill="#555"/></svg><svg style="left:617px;top:145px;" width="8" height="8" viewBox="0 0 8 8"><path d="M0.5,7.5 V0.5 H7.5" fill="none" stroke="#777" stroke-width="1"/><path d="M3,3 L7,7 M7,4 V7 H4" fill="none" stroke="#555" stroke-width="1.2"/></svg><div style="left:628px;top:68px;width:1px;height:85px;background:#d5d5d5;"></div><div style="left:633px;top:75px;width:131px;height:23px;background:#fff;box-sizing:border-box;border:1px solid #c6c6c6"></div><svg style="left:752.5px;top:85px;" width="7" height="4" viewBox="0 0 7 4"><polygon points="0.5,0.5 6.5,0.5 3.5,3.5" fill="#555"/></svg><svg style="left:639px;top:108px;" width="12" height="18" viewBox="0 0 12 18"><text x="1" y="15" font-family="Liberation Serif" font-size="17" fill="#555">$</text></svg><svg style="left:656.5px;top:116px;" width="7" height="4" viewBox="0 0 7 4"><polygon points="0.5,0.5 6.5,0.5 3.5,3.5" fill="#555"/></svg><svg style="left:671px;top:108px;" width="17" height="18" viewBox="0 0 17 18"><text x="0.5" y="15" font-family="Liberation Sans" font-size="14.5" fill="#555">%</text></svg><svg style="left:695px;top:112px;" width="9" height="10" viewBox="0 0 9 10"><circle cx="4.5" cy="3.5" r="2.3" fill="#555"/><path d="M6.5,3.5 Q6.5,7 3,8.5" fill="none" stroke="#555" stroke-width="1.5"/></svg><div style="left:715px;top:107px;width:1px;height:21px;background:#d5d5d5;"></div><svg style="left:722px;top:109px;" width="17" height="17" viewBox="0 0 17 17"><path d="M1.5,5.5 H7.5 M4,3 L1.5,5.5 L4,8" fill="none" stroke="#3f7fc4" stroke-width="1.4"/><text x="7" y="7" font-family="Liberation Sans" font-size="9" fill="#444">.0</text><text x="3" y="14.5" font-family="Liberation Sans" font-size="9" fill="#444">.00</text></svg><svg style="left:744px;top:109px;" width="17" height="17" viewBox="0 0 17 17"><text x="3" y="7" font-family="Liberation Sans" font-size="9" fill="#444">.00</text><path d="M1,12.5 H7 M4.5,10 L7,12.5 L4.5,15" fill="none" stroke="#3f7fc4" stroke-width="1.4"/><text x="7" y="14.5" font-family="Liberation Sans" font-size="9" fill="#444">.0</text></svg><svg style="left:757px;top:145px;" width="8" height="8" viewBox="0 0 8 8"><path d="M0.5,7.5 V0.5 H7.5" fill="none" stroke="#777" stroke-width="1"/><path d="M3,3 L7,7 M7,4 V7 H4" fill="none" stroke="#555" stroke-width="1.2"/></svg><div style="left:768px;top:68px;width:1px;height:85px;background:#d5d5d5;"></div><svg style="left:795px;top:72px;" width="31" height="31" viewBox="0 0 31 31"><rect x="0.6" y="0.6" width="27.4" height="24.4" fill="#fff" stroke="#777" stroke-width="1.2"/><rect x="8" y="1" width="6.5" height="5.5" fill="#e05d3a"/><rect x="8" y="7" width="11.5" height="5.5" fill="#4a86c8"/><rect x="8" y="13" width="9.5" height="5.5" fill="#e05d3a"/><rect x="8" y="19" width="4.5" height="5.5" fill="#4a86c8"/><path d="M7.5,0.6 V25 M20.3,0.6 V25 M0.6,6.6 H28 M0.6,12.6 H28 M0.6,18.6 H28" stroke="#999" stroke-width="1.1"/><rect x="14.5" y="17.5" width="15" height="12.5" fill="#fff" stroke="#777" stroke-width="1.3"/><path d="M18,21.5 H25.5 M18,24.8 H25.5 M23.5,19.3 L19.5,27.3" stroke="#444" stroke-width="1.2"/></svg><svg style="left:837.0px;top:128px;" width="6" height="4" viewBox="0 0 6 4"><polygon points="0.5,0.5 5.5,0.5 3.0,3.5" fill="#666"/></svg><svg style="left:859px;top:73px;" width="31" height="31" viewBox="0 0 31 31"><rect x="7.4" y="6.3" width="18.3" height="15.3" fill="#c5d9ef"/><rect x="1.1" y="1.4" width="24.6" height="20.2" fill="none" stroke="#777" stroke-width="1.2"/><path d="M7.4,1.4 V21.6 M13.4,1.4 V21.6 M19.4,1.4 V21.6 M1.1,6.3 H25.7 M1.1,11.3 H25.7 M1.1,16.4 H25.7" stroke="#999" stroke-width="1.1"/><polygon points="30.5,6 30.5,10.5 24,17.5 21,14.5" fill="#777"/><polygon points="20.2,15.3 23.2,18.3 20.5,21 17.5,18" fill="#777"/><path d="M6.5,29.5 Q10,24 15,20.5 Q18,18.5 20.5,21 Q22,24 18,27.5 Q14,29.5 6.5,29.5 Z" fill="#4a86c8"/><path d="M15.5,21.5 Q17.5,20 19,21.5 L17,24 Z" fill="#fff"/></svg><svg style="left:887.5px;top:128px;" width="6" height="4" viewBox="0 0 6 4"><polygon points="0.5,0.5 5.5,0.5 3.0,3.5" fill="#666"/></svg><div style="left:903px;top:71px;width:548px;height:61px;background:#fff;box-sizing:border-box;border:1px solid #c6c6c6"></div><div style="left:904px;top:73px;width:106px;height:28px;background:#fff;box-sizing:border-box;border:3px solid #c6c6c6"></div><div style="left:1013px;top:76px;width:100px;height:22px;background:#ffc7ce;"></div><div style="left:1119px;top:76px;width:100px;height:22px;background:#c6efce;"></div><div style="left:1225px;top:76px;width:100px;height:22px;background:#ffeb9c;"></div><div style="left:1331px;top:76px;width:100px;height:22px;background:#f2f2f2;box-sizing:border-box;border:1px solid #7f7f7f"></div><div style="left:907px;top:104px;width:100px;height:22px;background:#a5a5a5;box-sizing:border-box;border:3px double #3f3f3f"></div><div style="left:1331px;top:104px;width:100px;height:22px;background:#ffcc99;box-sizing:border-box;border:1px solid #7f7f7f"></div><div style="left:1436px;top:71px;width:15px;height:61px;background:#fff;box-sizing:border-box;border:1px solid #c6c6c6"></div><div style="left:1436px;top:71px;width:15px;height:21px;background:#e6e6e6;box-sizing:border-box;border:1px solid #c6c6c6"></div><div style="left:1436px;top:110px;width:15px;height:1px;background:#c6c6c6;"></div><svg style="left:1440px;top:78px;" width="8" height="5" viewBox="0 0 8 5"><polygon points="0.5,4 7.5,4 4,0.5" fill="#c6c6c6"/></svg><svg style="left:1440px;top:99px;" width="8" height="5" viewBox="0 0 8 5"><polygon points="0.5,0.5 7.5,0.5 4,4" fill="#666"/></svg><svg style="left:1440px;top:117px;" width="8" height="8" viewBox="0 0 8 8"><rect x="0.5" y="0" width="7" height="1" fill="#666"/><polygon points="0.5,3 7.5,3 4,6.5" fill="#666"/></svg><div style="left:1457px;top:68px;width:1px;height:85px;background:#d5d5d5;"></div><svg style="left:1469px;top:71px;" width="28" height="30" viewBox="0 0 28 30"><rect x="1.5" y="1.5" width="7" height="5.5" fill="#fff" stroke="#777" stroke-width="1.1"/><rect x="8.5" y="1.5" width="7" height="5.5" fill="#fff" stroke="#777" stroke-width="1.1"/><rect x="12.5" y="9.5" width="7" height="5.5" fill="#c5d9ef" stroke="#777" stroke-width="1.1"/><rect x="19.5" y="9.5" width="7" height="5.5" fill="#c5d9ef" stroke="#777" stroke-width="1.1"/><path d="M9.5,12.3 H3 M5.8,9.3 L2.5,12.3 L5.8,15.3" fill="none" stroke="#4a86c8" stroke-width="1.9"/><rect x="1.5" y="17.5" width="7" height="5" fill="#fff" stroke="#777" stroke-width="1.1"/><rect x="8.5" y="17.5" width="7" height="5" fill="#fff" stroke="#777" stroke-width="1.1"/><rect x="1.5" y="22.5" width="7" height="5" fill="#fff" stroke="#777" stroke-width="1.1"/><rect x="8.5" y="22.5" width="7" height="5" fill="#fff" stroke="#777" stroke-width="1.1"/></svg><svg style="left:1510px;top:71px;" width="31" height="30" viewBox="0 0 31 30"><rect x="1.5" y="1.5" width="7" height="5.5" fill="#fff" stroke="#777" stroke-width="1.1"/><rect x="8.5" y="1.5" width="7" height="5.5" fill="#fff" stroke="#777" stroke-width="1.1"/><rect x="7.5" y="9.5" width="8" height="5" fill="#c5d9ef" stroke="#777" stroke-width="1.1"/><polygon points="15.5,9.5 19.5,12 15.5,14.5" fill="#c5d9ef"/><rect x="1.5" y="18.5" width="7" height="5" fill="#fff" stroke="#777" stroke-width="1.1"/><rect x="8.5" y="18.5" width="7" height="5" fill="#fff" stroke="#777" stroke-width="1.1"/><rect x="1.5" y="23.5" width="7" height="5" fill="#fff" stroke="#777" stroke-width="1.1"/><rect x="8.5" y="23.5" width="7" height="5" fill="#fff" stroke="#777" stroke-width="1.1"/><path d="M16,6.5 L29.5,19 M29.5,7 L16,19" stroke="#e05d3a" stroke-width="2.2"/></svg><svg style="left:1553px;top:70px;" width="30" height="33" viewBox="0 0 30 33"><path d="M2,3.4 H21.5 M4.5,1 L2,3.4 L4.5,5.8 M19,1 L21.5,3.4 L19,5.8" fill="none" stroke="#4a86c8" stroke-width="1.3"/><path d="M0.5,1 V5.8 M23,1 V5.8" stroke="#4a86c8" stroke-width="1.1"/><rect x="0.5" y="7.25" width="27" height="20" fill="#fff" stroke="#777" stroke-width="1.1"/><path d="M7.6,7.25 V27.25 M15.3,7.25 V27.25 M22.3,7.25 V27.25 M0.5,12.5 H27.5 M0.5,22.4 H27.5" stroke="#999" stroke-width="1"/><rect x="8.1" y="13" width="6.7" height="9" fill="#4a86c8"/><path d="M0.5,27.3 V31.5 H7 L9,29 V31.5 H15 L18,28" fill="none" stroke="#777" stroke-width="1.1"/></svg><svg style="left:1479.0px;top:127px;" width="7" height="4" viewBox="0 0 7 4"><polygon points="0.5,0.5 6.5,0.5 3.5,3.5" fill="#666"/></svg><svg style="left:1521.0px;top:127px;" width="7" height="4" viewBox="0 0 7 4"><polygon points="0.5,0.5 6.5,0.5 3.5,3.5" fill="#666"/></svg><svg style="left:1564.0px;top:127px;" width="7" height="4" viewBox="0 0 7 4"><polygon points="0.5,0.5 6.5,0.5 3.5,3.5" fill="#666"/></svg><div style="left:1593px;top:68px;width:1px;height:85px;background:#d5d5d5;"></div><svg style="left:1600px;top:69px;" width="17" height="17" viewBox="0 0 17 17"><path d="M15.5,1.5 H1.5 L8,8.5 L1.5,15.5 H15.5" fill="none" stroke="#444" stroke-width="2.2"/></svg><svg style="left:1679.0px;top:78px;" width="7" height="4" viewBox="0 0 7 4"><polygon points="0.5,0.5 6.5,0.5 3.5,3.5" fill="#666"/></svg><svg style="left:1601px;top:92px;" width="16" height="17" viewBox="0 0 16 17"><rect x="0.5" y="0.5" width="14" height="15" fill="#fff" stroke="#777"/><rect x="0.5" y="0.5" width="14" height="3" fill="#777"/><path d="M7.5,6 V13 M4.5,10 L7.5,13 L10.5,10" fill="none" stroke="#2f75c0" stroke-width="1.7"/></svg><svg style="left:1637.0px;top:100px;" width="7" height="4" viewBox="0 0 7 4"><polygon points="0.5,0.5 6.5,0.5 3.5,3.5" fill="#666"/></svg><svg style="left:1601px;top:116px;" width="16" height="16" viewBox="0 0 16 16"><path d="M0.8,11.5 L10.5,1.8 Q11.5,0.8 12.5,1.8 L14.5,3.8 Q15.5,4.8 14.5,5.8 L4.8,15.5 Z" fill="#e8768f"/><path d="M3.5,8.8 L7.5,12.8" stroke="#f3f3f3" stroke-width="1.2"/></svg><svg style="left:1649.0px;top:124px;" width="7" height="4" viewBox="0 0 7 4"><polygon points="0.5,0.5 6.5,0.5 3.5,3.5" fill="#666"/></svg><svg style="left:1695px;top:72px;" width="32" height="28" viewBox="0 0 32 28"><path d="M1.5,13 L6,1.5 L10.5,13 M3.2,9 H8.8" fill="none" stroke="#4a86c8" stroke-width="2"/><path d="M2,15.5 H10 L2,25.5 H10.5" fill="none" stroke="#9b59c5" stroke-width="2"/><path d="M12.5,8 H30 L23.5,15 V24 L19,21.5 V15 Z" fill="#777"/><path d="M21,15.5 V21" stroke="#fff" stroke-width="1"/></svg><svg style="left:1723.5px;top:128px;" width="6" height="4" viewBox="0 0 6 4"><polygon points="0.5,0.5 5.5,0.5 3.0,3.5" fill="#666"/></svg><svg style="left:1739px;top:71px;" width="30" height="30" viewBox="0 0 30 30"><circle cx="19" cy="10" r="8.5" fill="#fff" stroke="#4a86c8" stroke-width="2"/><path d="M12.5,16.5 L2.5,26.5" stroke="#4a86c8" stroke-width="3.2" stroke-linecap="round"/></svg><svg style="left:1767.5px;top:128px;" width="6" height="4" viewBox="0 0 6 4"><polygon points="0.5,0.5 5.5,0.5 3.0,3.5" fill="#666"/></svg><div style="left:1780px;top:68px;width:1px;height:85px;background:#d5d5d5;"></div><svg style="left:1900px;top:144px;" width="11" height="8" viewBox="0 0 11 8"><path d="M1,6.5 L5.5,2 L10,6.5" fill="none" stroke="#666" stroke-width="1.5"/></svg><div style="left:5px;top:167px;width:102px;height:26px;background:#fff;box-sizing:border-box;border:1px solid #c6c6c6"></div><svg style="left:92.5px;top:178px;" width="8" height="5" viewBox="0 0 8 5"><polygon points="0.5,0.5 7.5,0.5 4.0,4.5" fill="#777"/></svg><div style="left:121px;top:175px;width:2px;height:2px;background:#a0a0a0;"></div><div style="left:121px;top:180px;width:2px;height:2px;background:#a0a0a0;"></div><div style="left:121px;top:185px;width:2px;height:2px;background:#a0a0a0;"></div><div style="left:137px;top:167px;width:110px;height:26px;background:#fff;box-sizing:border-box;border:1px solid #c6c6c6"></div><svg style="left:149px;top:172px;" width="14" height="14" viewBox="0 0 14 14"><path d="M1.5,1.5 L11.5,11.5 M11.5,1.5 L1.5,11.5" stroke="#b5b5b5" stroke-width="1.3"/></svg><svg style="left:185px;top:172px;" width="15" height="14" viewBox="0 0 15 14"><path d="M1.5,7.5 L5.5,11.5 L13,2.5" fill="none" stroke="#c0c0c0" stroke-width="2"/></svg><svg style="left:220px;top:171px;" width="17" height="17" viewBox="0 0 17 17"><text x="1" y="13" font-family="Liberation Serif" font-style="italic" font-weight="bold" font-size="14" fill="#555">f</text><text x="7" y="13" font-family="Liberation Serif" font-style="italic" font-weight="bold" font-size="10" fill="#555">x</text></svg><div style="left:250px;top:167px;width:1665px;height:26px;background:#fff;box-sizing:border-box;border:1px solid #c6c6c6"></div><svg style="left:1902px;top:176px;" width="9" height="7" viewBox="0 0 9 7"><path d="M1,1.5 L4.5,5 L8,1.5" fill="none" stroke="#666" stroke-width="1.5"/></svg><div style="left:1902px;top:205px;width:15px;height:778px;background:#dadada;"></div><div style="left:1902px;top:205px;width:15px;height:15px;background:#fff;box-sizing:border-box;border:1px solid #ababab"></div><svg style="left:1905px;top:209px;" width="9" height="6" viewBox="0 0 9 6"><polygon points="0.5,5 8.5,5 4.5,0.5" fill="#666"/></svg><div style="left:1902px;top:220px;width:15px;height:122px;background:#fff;box-sizing:border-box;border:1px solid #ababab"></div><div style="left:1902px;top:968px;width:15px;height:15px;background:#fff;box-sizing:border-box;border:1px solid #ababab"></div><svg style="left:1905px;top:973px;" width="9" height="6" viewBox="0 0 9 6"><polygon points="0.5,0.5 8.5,0.5 4.5,5" fill="#666"/></svg><div style="left:1169px;top:989px;width:732px;height:15px;background:#dadada;"></div><div style="left:1169px;top:989px;width:15px;height:15px;background:#fff;box-sizing:border-box;border:1px solid #ababab"></div><svg style="left:1172px;top:992px;" width="6" height="9" viewBox="0 0 6 9"><polygon points="5,0.5 5,8.5 0.5,4.5" fill="#666"/></svg><div style="left:1184px;top:989px;width:666px;height:15px;background:#fff;box-sizing:border-box;border:1px solid #ababab"></div><div style="left:1886px;top:989px;width:15px;height:15px;background:#fff;box-sizing:border-box;border:1px solid #ababab"></div><svg style="left:1891px;top:992px;" width="6" height="9" viewBox="0 0 6 9"><polygon points="0.5,0.5 0.5,8.5 5,4.5" fill="#666"/></svg><div style="left:1152px;top:991px;width:2px;height:2px;background:#a0a0a0;"></div><div style="left:1152px;top:995px;width:2px;height:2px;background:#a0a0a0;"></div><div style="left:1152px;top:999px;width:2px;height:2px;background:#a0a0a0;"></div><svg style="left:26px;top:991px;" width="6" height="9" viewBox="0 0 6 9"><polygon points="5,0.5 5,8.5 0.5,4.5" fill="#b8b8b8"/></svg><svg style="left:55px;top:991px;" width="6" height="9" viewBox="0 0 6 9"><polygon points="0.5,0.5 0.5,8.5 5,4.5" fill="#b8b8b8"/></svg><div style="left:100px;top:982px;width:131px;height:25px;background:#fff;box-sizing:border-box;border-left:1px solid #ababab;border-right:1px solid #ababab"></div><div style="left:100px;top:1005px;width:131px;height:2px;background:#217346;"></div><div style="left:314px;top:986px;width:1px;height:20px;background:#ababab;"></div><svg style="left:346px;top:987px;" width="19" height="19" viewBox="0 0 19 19"><circle cx="9.5" cy="9.5" r="8" fill="none" stroke="#777" stroke-width="1.3"/><path d="M9.5,5 V14 M5,9.5 H14" stroke="#777" stroke-width="1.6"/></svg><div style="left:1634px;top:1011px;width:38px;height:21px;background:#c6c6c6;"></div><svg style="left:1646px;top:1014px;" width="14" height="14" viewBox="0 0 14 14"><rect x="0.7" y="0.7" width="11.8" height="11.8" fill="#d0d0d0" stroke="#666" stroke-width="1.4"/><path d="M4.6,0.7 V12.5 M8.6,0.7 V12.5 M0.7,4.6 H12.5 M0.7,8.6 H12.5" stroke="#666" stroke-width="1.3"/></svg><svg style="left:1684px;top:1014px;" width="15" height="14" viewBox="0 0 15 14"><rect x="0.7" y="0.7" width="12.4" height="11.6" fill="#fff" stroke="#666" stroke-width="1.3"/><rect x="3.4" y="2.6" width="7" height="8" fill="none" stroke="#666" stroke-width="1.2"/><path d="M5,4.6 H8.8 M5,6.6 H8.8 M5,8.6 H8.8" stroke="#666" stroke-width="1"/></svg><svg style="left:1722px;top:1014px;" width="15" height="14" viewBox="0 0 15 14"><rect x="0.7" y="0.7" width="12.4" height="11.6" fill="#fff" stroke="#666" stroke-width="1.3"/><path d="M4.5,0.7 V7.5 M8.6,0.7 V7.5 H0.7" fill="none" stroke="#666" stroke-width="1.3"/></svg><div style="left:1753px;top:1020px;width:6px;height:2px;background:#666;"></div><div style="left:1763px;top:1021px;width:100px;height:1px;background:#a0a0a0;"></div><div style="left:1813px;top:1018px;width:1px;height:6px;background:#a0a0a0;"></div><div style="left:1819px;top:1015px;width:5px;height:11px;background:#666;"></div><svg style="left:1865px;top:1016px;" width="9" height="9" viewBox="0 0 9 9"><path d="M4.5,0.5 V8.5 M0.5,4.5 H8.5" stroke="#666" stroke-width="1.6"/></svg><svg style="left:727px;top:1045px;" width="23" height="23" viewBox="0 0 23 23"><defs><linearGradient id="wg" x1="0" y1="0" x2="1" y2="1"><stop offset="0" stop-color="#35c3f5"/><stop offset="1" stop-color="#0a6ad6"/></linearGradient></defs><rect x="0" y="0" width="11" height="11" rx="1" fill="url(#wg)"/><rect x="12" y="0" width="11" height="11" rx="1" fill="url(#wg)"/><rect x="0" y="12" width="11" height="11" rx="1" fill="url(#wg)"/><rect x="12" y="12" width="11" height="11" rx="1" fill="url(#wg)"/></svg><div style="left:764px;top:1041px;width:218px;height:30px;background:#edf3f7;box-sizing:border-box;border:1px solid #d6e0e6;border-radius:15px"></div><svg style="left:774px;top:1048px;" width="16" height="16" viewBox="0 0 16 16"><circle cx="6.5" cy="6.5" r="5" fill="none" stroke="#222" stroke-width="1.6"/><path d="M10,10 L14.5,14.5" stroke="#222" stroke-width="1.8"/></svg><svg style="left:929px;top:1044px;" width="48" height="24" viewBox="0 0 48 24"><path d="M2,14 Q10,8 22,18" fill="none" stroke="#d4a24c" stroke-width="3"/><path d="M6,9 Q14,6 20,16" fill="none" stroke="#c99440" stroke-width="2.5"/><path d="M20,3 L24,1 L27,4 L30,2 L29,7 L26,10 L22,8 Z" fill="#e2452a"/><circle cx="38" cy="15" r="8.5" fill="#f0922b"/><path d="M38,3 V8" stroke="#8a6a3a" stroke-width="1.5"/></svg><svg style="left:995px;top:1045px;" width="24" height="21" viewBox="0 0 24 21"><path d="M0,2 Q0,0 2,0 H8 L10,2 H22 Q24,2 24,4 V19 Q24,21 22,21 H2 Q0,21 0,19 Z" fill="#f7c948"/><rect x="0" y="4" width="24" height="17" rx="1.5" fill="#ffd75e"/><rect x="5" y="14" width="14" height="7" rx="1.5" fill="#1976d2"/></svg><svg style="left:1038px;top:1038px;" width="32" height="32" viewBox="0 0 32 32"><circle cx="13" cy="19" r="12" fill="#db4437"/><path d="M13,19 L2.6,13 A12,12 0 0 0 13,31 Z" fill="#0f9d58"/><path d="M13,19 L13,31 A12,12 0 0 0 23.4,13 Z" fill="#f4b400"/><circle cx="13" cy="19" r="5.5" fill="#fff"/><circle cx="13" cy="19" r="4.3" fill="#4285f4"/><circle cx="22" cy="9" r="8" fill="#2b3a42"/><circle cx="22" cy="8" r="3.5" fill="#c99a7c"/></svg><svg style="left:1082px;top:1044px;" width="26" height="25" viewBox="0 0 26 25"><path d="M12,1 C20,1 25,5 25,12 C25,19 20,23 12,23 C9,23 6,24 3,24 C4,22 3,21 2,19 C0,17 0,14 0,12 C0,5 5,1 12,1 Z" fill="#fff" stroke="#0068ff" stroke-width="1.5"/><text x="4.5" y="15.5" font-family="Liberation Sans" font-weight="bold" font-size="8.5" fill="#0068ff">Zalo</text></svg><svg style="left:1126px;top:1043px;" width="26" height="26" viewBox="0 0 26 26"><rect x="7" y="1" width="17" height="12" fill="#1aa0d8"/><rect x="13" y="13" width="5" height="3" fill="#aaa"/><rect x="1" y="9" width="7" height="5" fill="#2f8fd8"/><rect x="4" y="15" width="10" height="8" rx="1" fill="#bbb"/><path d="M6,15 V12 A3,3 0 0 1 12,12 V15" fill="none" stroke="#999" stroke-width="1.5"/><path d="M14,17 L20,23 M20,18 V23 H15" fill="none" stroke="#4caf50" stroke-width="2"/></svg><div style="left:1164px;top:1037px;width:38px;height:38px;background:#e8f0f4;border-radius:4px"></div><svg style="left:1171px;top:1044px;" width="24" height="23" viewBox="0 0 24 23"><rect x="9" y="2" width="14" height="19" fill="#fff" stroke="#1d6f42"/><path d="M9,7 H23 M9,11.5 H23 M9,16 H23 M16,2 V21" stroke="#1d6f42" stroke-width="0.9"/><path d="M0,3 L13,0 V23 L0,20 Z" fill="#1d6f42"/><path d="M3.5,7 L9,16 M9,7 L3.5,16" stroke="#fff" stroke-width="2"/></svg><div style="left:1004px;top:1072px;width:6px;height:3px;background:#8a8f93;border-radius:2px"></div><div style="left:1048px;top:1072px;width:6px;height:3px;background:#8a8f93;border-radius:2px"></div><div style="left:1092px;top:1072px;width:6px;height:3px;background:#8a8f93;border-radius:2px"></div><div style="left:1136px;top:1072px;width:6px;height:3px;background:#8a8f93;border-radius:2px"></div><div style="left:1175px;top:1072px;width:16px;height:3px;background:#0a67c4;border-radius:2px"></div><svg style="left:1707px;top:1050px;" width="14" height="10" viewBox="0 0 14 10"><path d="M1.5,8 L7,2.5 L12.5,8" fill="none" stroke="#222" stroke-width="1.4"/></svg><svg style="left:1781px;top:1047px;" width="19" height="19" viewBox="0 0 19 19"><rect x="1" y="1.5" width="11" height="11" fill="none" stroke="#222" stroke-width="1.2"/><path d="M4,15.5 H10 M7,12.5 V15.5" stroke="#222" stroke-width="1.2"/><rect x="12.5" y="1" width="4" height="5.5" rx="1" fill="#d3e3eb" stroke="#222"/><path d="M14.5,6.5 V17" stroke="#222" stroke-width="1.2"/></svg><svg style="left:1805px;top:1047px;" width="18" height="17" viewBox="0 0 18 17"><path d="M1,6 H4 L8.5,2 V15 L4,11 H1 Z" fill="none" stroke="#222" stroke-width="1.2"/><path d="M11,5.5 Q13,8.5 11,11.5" fill="none" stroke="#333" stroke-width="1"/><path d="M13.5,3.5 Q16.5,8.5 13.5,13.5" fill="none" stroke="#999" stroke-width="1"/></svg><div style="left:71px;top:269px;width:980px;height:2px;background:#0000ff;"></div>
<div style="left:72.0px;top:237px;color:#0000ff;font-family:'Liberation Serif', serif;font-size:32px;font-weight:bold;font-style:normal;letter-spacing:0.163px;">TÍNH TOÁN THÀNH PHẦN CẤP PHỐI BÊ TÔNG XI MĂNG THEO</div><div style="left:102.0px;top:284px;color:#0000ff;font-family:'Liberation Serif', serif;font-size:27px;font-weight:bold;font-style:normal;letter-spacing:0.87px;">" CHỈ DẪN KỸ THUẬT :&nbsp; CHỌN THÀNH PHẦN BÊTÔNG CÁC LOẠI "</div><div style="left:39.0px;top:360.7px;color:#000;font-family:'Liberation Serif', serif;font-size:24px;font-weight:bold;font-style:normal;letter-spacing:0.367px;">I. CÁC THÔNG SỐ KỸ THUẬT:</div><div style="left:135.0px;top:392.7px;color:#000;font-family:'Liberation Serif', serif;font-size:24px;font-weight:bold;font-style:normal;letter-spacing:0.522px;">1.1. Yêu cầu về Bê tông:</div><div style="left:258.8px;top:430px;color:#000;font-family:'Liberation Serif', serif;font-size:23px;font-weight:normal;font-style:normal;letter-spacing:0.608px;">- Cường độ bê tông (R<span style="font-size:15px;position:relative;top:4px">n</span>) :</div><div style="left:577.6px;top:429px;color:#0000ff;font-family:'Liberation Serif', serif;font-size:24px;font-weight:bold;font-style:normal;letter-spacing:0.6px;">30</div><div style="left:608.1px;top:430px;color:#000;font-family:'Liberation Serif', serif;font-size:23px;font-weight:normal;font-style:normal;letter-spacing:0.0px;;transform:scaleX(1.0952);transform-origin:0 0">MPa</div><div style="left:258.8px;top:467.2px;color:#000;font-family:'Liberation Serif', serif;font-size:23px;font-weight:normal;font-style:normal;letter-spacing:0.875px;">- Hệ số an toàn :</div><div style="left:559.7px;top:466.2px;color:#0000ff;font-family:'Liberation Serif', serif;font-size:24px;font-weight:bold;font-style:normal;letter-spacing:0.1px;">1.15</div><div style="left:258.8px;top:503.7px;color:#000;font-family:'Liberation Serif', serif;font-size:23px;font-weight:normal;font-style:normal;letter-spacing:0.709px;">- Độ sụt bê tông (ĐS) :</div><div style="left:590.8px;top:502.7px;color:#0000ff;font-family:'Liberation Serif', serif;font-size:24px;font-weight:bold;font-style:normal;letter-spacing:0.0px;">5</div><div style="left:608.1px;top:503.7px;color:#000;font-family:'Liberation Serif', serif;font-size:23px;font-weight:normal;font-style:normal;letter-spacing:0.0px;;transform:scaleX(1.1037);transform-origin:0 0">cm</div><div style="left:134.25px;top:573.4px;color:#000;font-family:'Liberation Serif', serif;font-size:24px;font-weight:bold;font-style:normal;letter-spacing:0.556px;">1.2. Yêu cầu về vật liệu:</div><div style="left:135.25px;top:607.75px;color:#000;font-family:'Liberation Serif', serif;font-size:24px;font-weight:bold;font-style:italic;letter-spacing:0.15px;">1.2.1. Xi măng :</div><div style="left:233.8px;top:645.7px;color:#000;font-family:'Liberation Serif', serif;font-size:23px;font-weight:normal;font-style:normal;letter-spacing:0.792px;">+ Loại xi măng (Nếu XM Pooclăng hỗn hợp, XM xỉ thì điền vào ô chọn sau số "<span style="font-weight:bold;">0</span>";</div><div style="left:252.0px;top:678.6px;color:#000;font-family:'Liberation Serif', serif;font-size:23px;font-weight:normal;font-style:normal;letter-spacing:0.756px;">nếu XM Pooclăng Puzơlan thì điền vào ô chọn sau số " <span style="font-weight:bold;font-size:30px;">1</span>"</div><div style="left:252.0px;top:720.2px;color:#000;font-family:'Liberation Serif', serif;font-size:23px;font-weight:normal;font-style:normal;letter-spacing:0.7px;">nếu XM Pooclăng thông thường thì điền vào ô chọn sau số " <span style="font-weight:bold;font-size:30px;">2</span> ") =&gt;</div><div style="left:930.9px;top:726.2px;color:#ff0000;font-family:'Liberation Serif', serif;font-size:24px;font-weight:bold;font-style:normal;letter-spacing:0.0px;">Chọn</div><div style="left:1036.3px;top:726.2px;color:#0000ff;font-family:'Liberation Serif', serif;font-size:24px;font-weight:bold;font-style:normal;letter-spacing:0.0px;">2</div><div style="left:233.8px;top:764.7px;color:#000;font-family:'Liberation Serif', serif;font-size:23px;font-weight:normal;font-style:normal;letter-spacing:0.814px;">+ Tính chất cơ lý của xi măng</div><div style="left:259.0px;top:801px;color:#000;font-family:'Liberation Serif', serif;font-size:23px;font-weight:normal;font-style:normal;letter-spacing:0.667px;">- Cường độ thực tế của Xi măng (R<span style="font-size:15px;position:relative;top:4px">x</span>) :</div><div style="left:737.8px;top:801px;color:#0000ff;font-family:'Liberation Serif', serif;font-size:23px;font-weight:normal;font-style:normal;letter-spacing:0.1px;">47</div><div style="left:767.51px;top:801px;color:#000;font-family:'Liberation Serif', serif;font-size:23px;font-weight:normal;font-style:normal;letter-spacing:0.0px;;transform:scaleX(1.0857);transform-origin:0 0">MPa</div><div style="left:259.0px;top:841px;color:#000;font-family:'Liberation Serif', serif;font-size:23px;font-weight:normal;font-style:normal;letter-spacing:0.697px;">- Khối lượng riêng của Xi măng (ρ<span style="font-size:15px;position:relative;top:4px">x</span>) :</div><div style="left:732.4px;top:841px;color:#0000ff;font-family:'Liberation Serif', serif;font-size:23px;font-weight:normal;font-style:normal;letter-spacing:-0.55px;">3.1</div><div style="left:767.6px;top:841px;color:#000;font-family:'Liberation Serif', serif;font-size:23px;font-weight:normal;font-style:normal;letter-spacing:0.775px;">g/cm<span style="font-size:15px;position:relative;top:-10px">3</span></div><div style="left:135.25px;top:877.7px;color:#000;font-family:'Liberation Serif', serif;font-size:24px;font-weight:bold;font-style:italic;letter-spacing:0.292px;">1.2.2. Đá (hoặc sỏi)</div><div style="left:135.25px;top:907px;color:#000;font-family:'Liberation Serif', serif;font-size:24px;font-weight:bold;font-style:italic;letter-spacing:0.233px;">1.2.2. Đá - điền vào ô sau là số " <span style="font-size:30px">1</span> " (hoặc sỏi - điền vào ô sau là số "0") : =&gt;</div><div style="left:930.2px;top:913px;color:#ff0000;font-family:'Liberation Serif', serif;font-size:24px;font-weight:bold;font-style:normal;letter-spacing:0.167px;">Chọn</div><div style="left:1033.3px;top:913px;color:#0000ff;font-family:'Liberation Serif', serif;font-size:24px;font-weight:bold;font-style:normal;letter-spacing:0.0px;">1</div><div style="left:259.2px;top:955px;color:#000;font-family:'Liberation Serif', serif;font-size:23px;font-weight:normal;font-style:normal;letter-spacing:0.564px;">- Khối lượng riêng (ρ <span style="font-size:15px;position:relative;top:4px">đ</span>) :</div><div style="left:718.5px;top:955px;color:#0000ff;font-family:'Liberation Serif', serif;font-size:23px;font-weight:normal;font-style:normal;letter-spacing:0.5px;">2.61</div><div style="left:767.8px;top:955px;color:#000;font-family:'Liberation Serif', serif;font-size:23px;font-weight:normal;font-style:normal;letter-spacing:0.875px;">g/cm<span style="font-size:15px;position:relative;top:-10px">3</span></div><div style="left:823.3px;top:9px;color:#ffffff;font-family:'Liberation Sans', sans-serif;font-size:12px;font-weight:normal;font-style:normal;letter-spacing:0.004px;">TinhCapPhoiBeTong&nbsp; [Compatibility Mode]&nbsp; -&nbsp; Excel</div><div style="left:1678.0px;top:9px;color:#217346;font-family:'Liberation Sans', sans-serif;font-size:12px;font-weight:normal;font-style:normal;letter-spacing:0.017px;">Sign in</div><div style="left:19.3px;top:42px;color:#ffffff;font-family:'Liberation Sans', sans-serif;font-size:12px;font-weight:normal;font-style:normal;letter-spacing:-0.0px;">File</div><div style="left:72.4px;top:42px;color:#217346;font-family:'Liberation Sans', sans-serif;font-size:12px;font-weight:normal;font-style:normal;letter-spacing:0.85px;">Home</div><div style="left:132.3px;top:42px;color:#ffffff;font-family:'Liberation Sans', sans-serif;font-size:12px;font-weight:normal;font-style:normal;letter-spacing:-0.22px;">Insert</div><div style="left:188.0px;top:42px;color:#ffffff;font-family:'Liberation Sans', sans-serif;font-size:12px;font-weight:normal;font-style:normal;letter-spacing:-0.19px;">Page Layout</div><div style="left:280.0px;top:42px;color:#ffffff;font-family:'Liberation Sans', sans-serif;font-size:12px;font-weight:normal;font-style:normal;letter-spacing:0.057px;">Formulas</div><div style="left:356.3px;top:42px;color:#ffffff;font-family:'Liberation Sans', sans-serif;font-size:12px;font-weight:normal;font-style:normal;letter-spacing:-0.167px;">Data</div><div style="left:407.3px;top:42px;color:#ffffff;font-family:'Liberation Sans', sans-serif;font-size:12px;font-weight:normal;font-style:normal;letter-spacing:-0.38px;">Review</div><div style="left:471.9px;top:42px;color:#ffffff;font-family:'Liberation Sans', sans-serif;font-size:12px;font-weight:normal;font-style:normal;letter-spacing:-0.233px;">View</div><div style="left:523.0px;top:42px;color:#ffffff;font-family:'Liberation Sans', sans-serif;font-size:12px;font-weight:normal;font-style:normal;letter-spacing:0.367px;">Help</div><div style="left:594.4px;top:42px;color:#ffffff;font-family:'Liberation Sans', sans-serif;font-size:12px;font-weight:normal;font-style:normal;letter-spacing:0.1px;">Tell me what you want to do</div><div style="left:1866.2px;top:42px;color:#ffffff;font-family:'Liberation Sans', sans-serif;font-size:12px;font-weight:normal;font-style:normal;letter-spacing:-0.4px;">Share</div><div style="left:10.6px;top:106px;color:#262626;font-family:'Liberation Sans', sans-serif;font-size:12px;font-weight:normal;font-style:normal;letter-spacing:-0.4px;">Paste</div><div style="left:67.5px;top:72px;color:#262626;font-family:'Liberation Sans', sans-serif;font-size:12px;font-weight:normal;font-style:normal;letter-spacing:0.25px;">Cut</div><div style="left:67.5px;top:94.5px;color:#262626;font-family:'Liberation Sans', sans-serif;font-size:12px;font-weight:normal;font-style:normal;letter-spacing:-0.033px;">Copy</div><div style="left:67.5px;top:118px;color:#262626;font-family:'Liberation Sans', sans-serif;font-size:12px;font-weight:normal;font-style:normal;letter-spacing:-0.038px;">Format Painter</div><div style="left:44.6px;top:141px;color:#262626;font-family:'Liberation Sans', sans-serif;font-size:12px;font-weight:normal;font-style:normal;letter-spacing:0.05px;">Clipboard</div><div style="left:165.0px;top:80px;color:#262626;font-family:'Liberation Sans', sans-serif;font-size:12px;font-weight:normal;font-style:normal;letter-spacing:0.0px;">VNI-Times</div><div style="left:275.7px;top:81px;color:#262626;font-family:'Liberation Sans', sans-serif;font-size:11.5px;font-weight:normal;font-style:normal;letter-spacing:-0.1px;">16</div><div style="left:240.4px;top:141px;color:#262626;font-family:'Liberation Sans', sans-serif;font-size:12px;font-weight:normal;font-style:normal;letter-spacing:-0.033px;">Font</div><div style="left:519.0px;top:80px;color:#262626;font-family:'Liberation Sans', sans-serif;font-size:12px;font-weight:normal;font-style:normal;letter-spacing:-0.25px;">Wrap Text</div><div style="left:518.0px;top:111px;color:#262626;font-family:'Liberation Sans', sans-serif;font-size:12px;font-weight:normal;font-style:normal;letter-spacing:0.077px;">Merge &amp; Center</div><div style="left:462.4px;top:141px;color:#262626;font-family:'Liberation Sans', sans-serif;font-size:12px;font-weight:normal;font-style:normal;letter-spacing:-0.137px;">Alignment</div><div style="left:635.7px;top:80px;color:#262626;font-family:'Liberation Sans', sans-serif;font-size:12px;font-weight:normal;font-style:normal;letter-spacing:-0.367px;">General</div><div style="left:669.5px;top:141px;color:#262626;font-family:'Liberation Sans', sans-serif;font-size:12px;font-weight:normal;font-style:normal;letter-spacing:-0.22px;">Number</div><div style="left:777.6px;top:106px;color:#262626;font-family:'Liberation Sans', sans-serif;font-size:12px;font-weight:normal;font-style:normal;letter-spacing:0.24px;">Conditional</div><div style="left:774.5px;top:122px;color:#262626;font-family:'Liberation Sans', sans-serif;font-size:12px;font-weight:normal;font-style:normal;letter-spacing:0.267px;">Formatting</div><div style="left:846.4px;top:106px;color:#262626;font-family:'Liberation Sans', sans-serif;font-size:12px;font-weight:normal;font-style:normal;letter-spacing:-0.188px;">Format as</div><div style="left:855.4px;top:122px;color:#262626;font-family:'Liberation Sans', sans-serif;font-size:12px;font-weight:normal;font-style:normal;letter-spacing:-0.225px;">Table</div><div style="left:1097.4px;top:142px;color:#262626;font-family:'Liberation Sans', sans-serif;font-size:11.5px;font-weight:normal;font-style:normal;letter-spacing:-0.28px;">Styles</div><div style="left:910.0px;top:79px;color:#000;font-family:'Liberation Serif', serif;font-size:13px;font-weight:normal;font-style:normal;letter-spacing:0.26px;">Normal</div><div style="left:1016.5px;top:79px;color:#9c0006;font-family:'Liberation Sans', sans-serif;font-size:13px;font-weight:normal;font-style:normal;letter-spacing:0.35px;">Bad</div><div style="left:1122.2px;top:79px;color:#006100;font-family:'Liberation Sans', sans-serif;font-size:13px;font-weight:normal;font-style:normal;letter-spacing:0.767px;">Good</div><div style="left:1228.4px;top:79px;color:#9c5700;font-family:'Liberation Sans', sans-serif;font-size:13px;font-weight:normal;font-style:normal;letter-spacing:1.05px;">Neutral</div><div style="left:1335.3px;top:79px;color:#fa7d00;font-family:'Liberation Sans', sans-serif;font-size:13px;font-weight:bold;font-style:normal;letter-spacing:-0.16px;">Calculation</div><div style="left:911.8px;top:107px;color:#ffffff;font-family:'Liberation Sans', sans-serif;font-size:13px;font-weight:bold;font-style:normal;letter-spacing:-0.322px;">Check Cell</div><div style="left:1017.5px;top:107px;color:#7f7f7f;font-family:'Liberation Sans', sans-serif;font-size:13px;font-weight:normal;font-style:italic;letter-spacing:0.4px;">Explanatory ...</div><div style="left:1123.2px;top:107px;color:#800080;font-family:'Liberation Serif', serif;font-size:13px;font-weight:normal;font-style:normal;letter-spacing:0.129px;text-decoration:underline">Followed Hyp...</div><div style="left:1229.0px;top:107px;color:#0000ff;font-family:'Liberation Serif', serif;font-size:13px;font-weight:normal;font-style:normal;letter-spacing:0.3px;text-decoration:underline">Hyperlink</div><div style="left:1334.6px;top:107px;color:#3f3f76;font-family:'Liberation Sans', sans-serif;font-size:13px;font-weight:normal;font-style:normal;letter-spacing:1.075px;">Input</div><div style="left:1467.5px;top:106px;color:#262626;font-family:'Liberation Sans', sans-serif;font-size:12px;font-weight:normal;font-style:normal;letter-spacing:-0.16px;">Insert</div><div style="left:1507.5px;top:106px;color:#262626;font-family:'Liberation Sans', sans-serif;font-size:12px;font-weight:normal;font-style:normal;letter-spacing:-0.15px;">Delete</div><div style="left:1547.5px;top:106px;color:#262626;font-family:'Liberation Sans', sans-serif;font-size:12px;font-weight:normal;font-style:normal;letter-spacing:0.1px;">Format</div><div style="left:1512.75px;top:142px;color:#262626;font-family:'Liberation Sans', sans-serif;font-size:11.5px;font-weight:normal;font-style:normal;letter-spacing:-0.438px;">Cells</div><div style="left:1620.25px;top:72px;color:#262626;font-family:'Liberation Sans', sans-serif;font-size:12px;font-weight:normal;font-style:normal;letter-spacing:0.075px;">AutoSum</div><div style="left:1619.6px;top:95px;color:#262626;font-family:'Liberation Sans', sans-serif;font-size:12px;font-weight:normal;font-style:normal;letter-spacing:0.133px;">Fill</div><div style="left:1619.6px;top:118px;color:#262626;font-family:'Liberation Sans', sans-serif;font-size:12px;font-weight:normal;font-style:normal;letter-spacing:-0.275px;">Clear</div><div style="left:1667.75px;top:141px;color:#262626;font-family:'Liberation Sans', sans-serif;font-size:12px;font-weight:normal;font-style:normal;letter-spacing:0.042px;">Editing</div><div style="left:1693.2px;top:106px;color:#262626;font-family:'Liberation Sans', sans-serif;font-size:12px;font-weight:normal;font-style:normal;letter-spacing:0.3px;">Sort &amp;</div><div style="left:1693.5px;top:122px;color:#262626;font-family:'Liberation Sans', sans-serif;font-size:12px;font-weight:normal;font-style:normal;letter-spacing:-0.1px;">Filter</div><div style="left:1735.5px;top:106px;color:#262626;font-family:'Liberation Sans', sans-serif;font-size:12px;font-weight:normal;font-style:normal;letter-spacing:0.32px;">Find &amp;</div><div style="left:1733.3px;top:122px;color:#262626;font-family:'Liberation Sans', sans-serif;font-size:12px;font-weight:normal;font-style:normal;letter-spacing:-0.44px;">Select</div><div style="left:12.4px;top:173px;color:#262626;font-family:'Liberation Sans', sans-serif;font-size:13px;font-weight:normal;font-style:normal;letter-spacing:-0.1px;">A1</div><div style="left:261.9px;top:174px;color:#333;font-family:'Liberation Sans', sans-serif;font-size:12px;font-weight:normal;font-style:normal;letter-spacing:0.353px;">TÍNH TOAÙN THAØNH PHAÀN CAÁP PHOÁI BEÂ TOÂNG XI MAÊNG THEO</div><div style="left:111.0px;top:988px;color:#217346;font-family:'Liberation Sans', sans-serif;font-size:13px;font-weight:bold;font-style:normal;letter-spacing:0.25px;">NhapLieu&amp;NDTT</div><div style="left:243.0px;top:989px;color:#444;font-family:'Liberation Sans', sans-serif;font-size:12.5px;font-weight:normal;font-style:normal;letter-spacing:-0.143px;">KetQuaTT</div><div style="left:6.0px;top:1015px;color:#333;font-family:'Liberation Sans', sans-serif;font-size:11px;font-weight:normal;font-style:normal;letter-spacing:-0.25px;">Ready</div><div style="left:1885.0px;top:1014px;color:#333;font-family:'Liberation Sans', sans-serif;font-size:10.5px;font-weight:normal;font-style:normal;letter-spacing:-0.333px;">150%</div><div style="left:799.0px;top:1049px;color:#555;font-family:'Liberation Sans', sans-serif;font-size:13.5px;font-weight:normal;font-style:normal;letter-spacing:0.0px;">Search</div><div style="left:1739.6px;top:1051px;color:#111;font-family:'Liberation Sans', sans-serif;font-size:11px;font-weight:normal;font-style:normal;letter-spacing:0.1px;">ENG</div><div style="left:1857.0px;top:1042px;color:#111;font-family:'Liberation Sans', sans-serif;font-size:11px;font-weight:normal;font-style:normal;letter-spacing:0.5px;">9:14 AM</div><div style="left:1839.0px;top:1058px;color:#111;font-family:'Liberation Sans', sans-serif;font-size:11px;font-weight:normal;font-style:normal;letter-spacing:0.778px;">11/24/2025</div>
</body></html>
